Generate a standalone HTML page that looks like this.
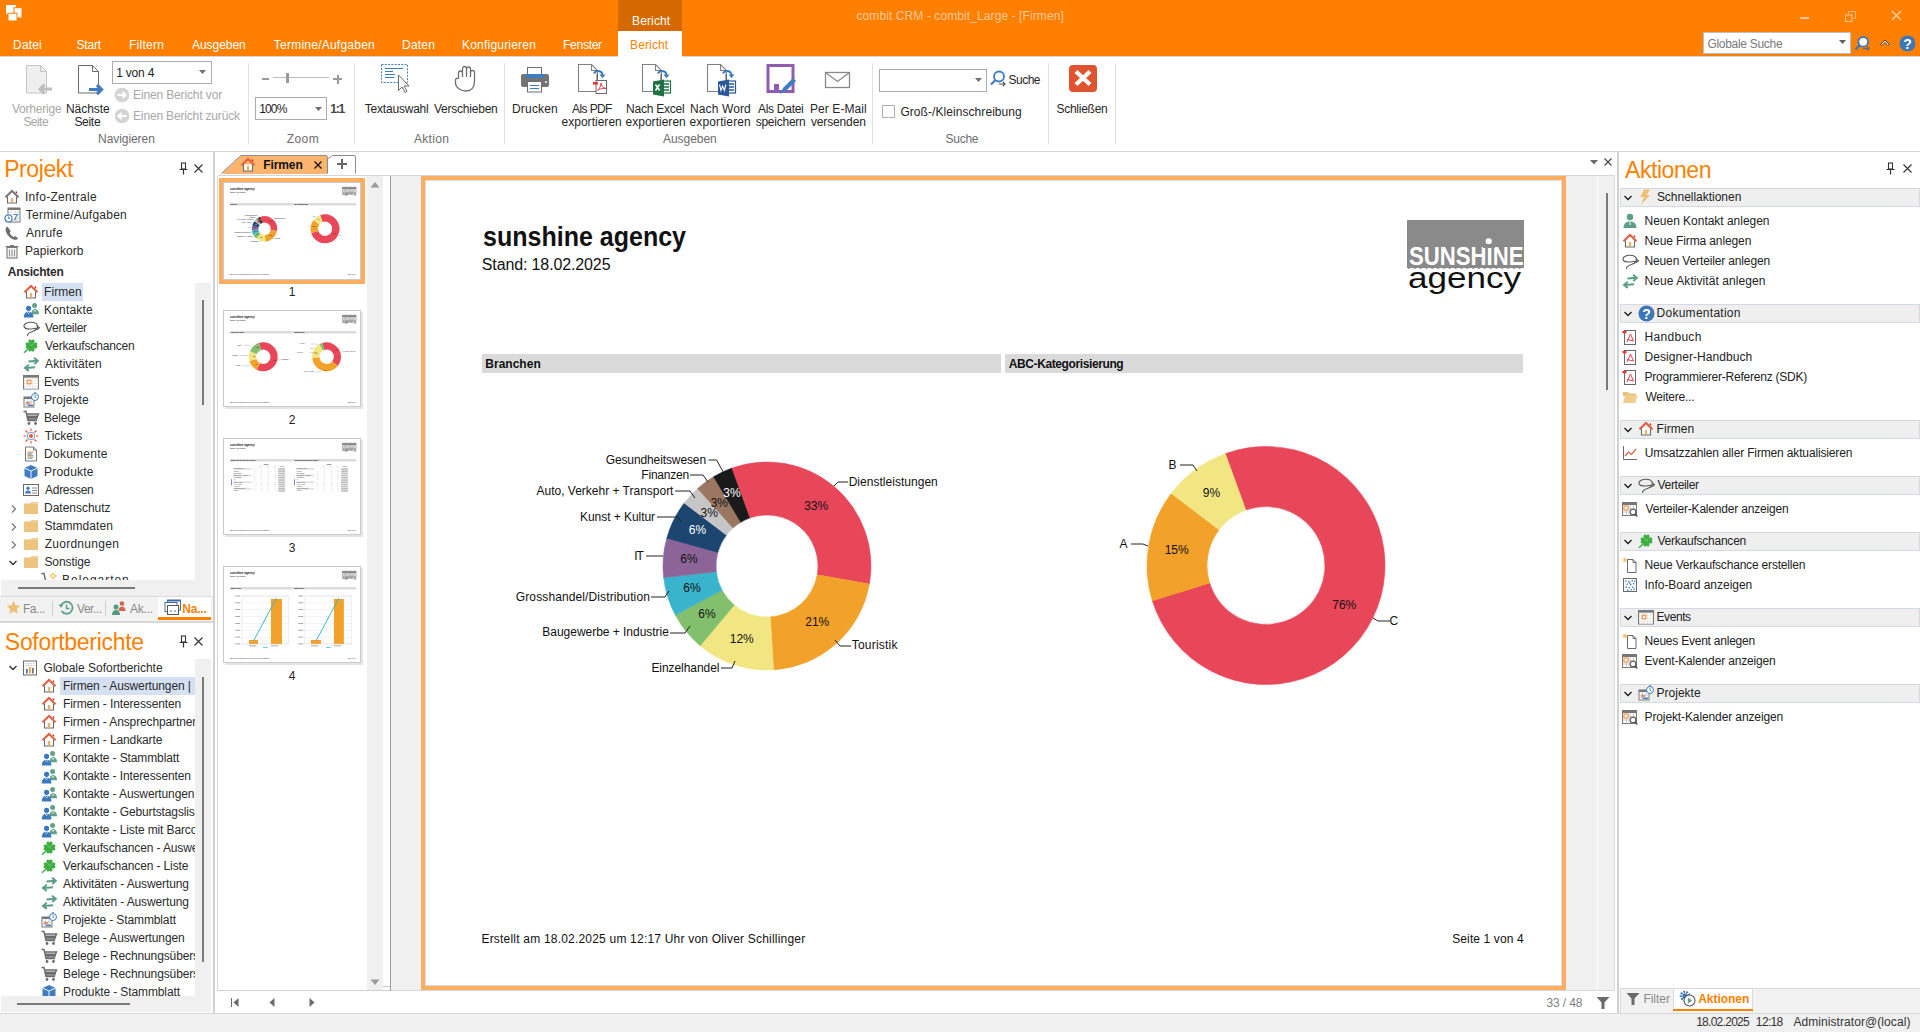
<!DOCTYPE html>
<html><head><meta charset="utf-8">
<style>
*{margin:0;padding:0;box-sizing:border-box}
html,body{width:1920px;height:1032px;overflow:hidden;background:#fff;font-family:"Liberation Sans",sans-serif;font-size:12px;color:#262626}
.t{position:absolute;white-space:nowrap}
.box{position:absolute}
svg{position:absolute;overflow:visible}
</style></head><body>
<div class="box" style="left:0px;top:0px;width:1920px;height:56px;background:#FF7F00;"></div>
<div class="box" style="left:618px;top:0px;width:64px;height:31px;background:#D56900;"></div>
<div class="box" style="left:618px;top:31px;width:64px;height:26px;background:#fff;"></div>
<div class="box" style="left:0px;top:56px;width:618px;height:1px;background:#D6D6D6;"></div>
<div class="box" style="left:682px;top:56px;width:1238px;height:1px;background:#D6D6D6;"></div>
<svg style="left:5px;top:4px;" width="20" height="20" viewBox="0 0 20 20"><rect x="1" y="1" width="10" height="9" fill="#fff"/>
<rect x="9" y="3.75" width="8" height="10.25" fill="#fff" stroke="#FF7F00" stroke-width="1"/>
<rect x="3" y="9.2" width="9" height="7.8" fill="#fff" stroke="#FF7F00" stroke-width="1"/></svg>
<div class="t" style="left:856.52px;top:9.84px;font-size:12px;line-height:12px;color:#FFC898;letter-spacing:0.091px;">combit CRM - combit_Large - [Firmen]</div>
<div class="t" style="left:632.04px;top:14.84px;font-size:12px;line-height:12px;color:#FFFFFF;letter-spacing:0.127px;">Bericht</div>
<div class="t" style="left:13.04px;top:38.84px;font-size:12px;line-height:12px;color:#FFFFFF;letter-spacing:0.180px;">Datei</div>
<div class="t" style="left:76.40px;top:38.84px;font-size:12px;line-height:12px;color:#FFFFFF;letter-spacing:-0.150px;">Start</div>
<div class="t" style="left:129.04px;top:38.84px;font-size:12px;line-height:12px;color:#FFFFFF;letter-spacing:0.240px;">Filtern</div>
<div class="t" style="left:192.00px;top:38.84px;font-size:12px;line-height:12px;color:#FFFFFF;letter-spacing:-0.040px;">Ausgeben</div>
<div class="t" style="left:273.76px;top:38.84px;font-size:12px;line-height:12px;color:#FFFFFF;letter-spacing:0.243px;">Termine/Aufgaben</div>
<div class="t" style="left:402.04px;top:38.84px;font-size:12px;line-height:12px;color:#FFFFFF;letter-spacing:0.190px;">Daten</div>
<div class="t" style="left:462.04px;top:38.84px;font-size:12px;line-height:12px;color:#FFFFFF;letter-spacing:0.200px;">Konfigurieren</div>
<div class="t" style="left:563.04px;top:38.84px;font-size:12px;line-height:12px;color:#FFFFFF;letter-spacing:-0.267px;">Fenster</div>
<div class="t" style="left:630.04px;top:38.84px;font-size:12px;line-height:12px;color:#FF7F00;letter-spacing:0.127px;">Bericht</div>
<div class="box" style="left:1800px;top:17px;width:9px;height:2px;background:#FFC898;"></div>
<svg style="left:1844px;top:10px;" width="14" height="14" viewBox="0 0 14 14"><path d="M4.5 4.5V1.5h7v7h-2.5" fill="none" stroke="#FFB880" stroke-width="1"/><rect x="1.5" y="5" width="6.5" height="6.5" fill="none" stroke="#FFC898" stroke-width="1"/></svg>
<svg style="left:1890px;top:9px;" width="14" height="14" viewBox="0 0 14 14"><path d="M2 2L11 11M11 2L2 11" stroke="#FFC898" stroke-width="1.5"/></svg>
<div class="box" style="left:1703px;top:32px;width:148px;height:22px;background:#fff;border:1px solid #B8C0C8"></div>
<div class="t" style="left:1707.40px;top:37.84px;font-size:12px;line-height:12px;color:#7A7A7A;letter-spacing:-0.293px;">Globale Suche</div>
<svg style="left:1839px;top:40px;" width="8" height="5" viewBox="0 0 8 5"><path d="M0 0h7L3.5 4z" fill="#606060"/></svg>
<svg style="left:1853px;top:35px;" width="20" height="18" viewBox="0 0 20 18"><circle cx="10.2" cy="6.8" r="4.8" fill="#fff" stroke="#3D78C0" stroke-width="1.8"/><path d="M6.8 10.2L2.5 14.5" stroke="#3D78C0" stroke-width="2.4"/><path d="M10 13.5h6M14 11.5l2 2-2 2" stroke="#707070" stroke-width="1.4" fill="none"/></svg>
<svg style="left:1879px;top:37px;" width="12" height="10" viewBox="0 0 12 10"><path d="M1.5 7.5L6 3l4.5 4.5L9 8.5 6 5.5 3 8.5z" fill="#FFE0C0" stroke="#3A3A3A" stroke-width="0.9" stroke-linejoin="round"/></svg>
<svg style="left:1899px;top:35px;" width="17" height="17" viewBox="0 0 17 17"><circle cx="8.5" cy="8.5" r="8" fill="#3D78B8"/><text x="8.5" y="13.5" text-anchor="middle" font-family="Liberation Sans" font-weight="bold" font-size="14" fill="#fff">?</text></svg>
<div class="box" style="left:0px;top:151px;width:1920px;height:1px;background:#D6D6D6;"></div>
<div class="box" style="left:248px;top:63px;width:1px;height:81px;background:#E1E1E1;"></div>
<div class="box" style="left:354px;top:63px;width:1px;height:81px;background:#E1E1E1;"></div>
<div class="box" style="left:504px;top:63px;width:1px;height:81px;background:#E1E1E1;"></div>
<div class="box" style="left:872px;top:63px;width:1px;height:81px;background:#E1E1E1;"></div>
<div class="box" style="left:1048px;top:63px;width:1px;height:81px;background:#E1E1E1;"></div>
<div class="box" style="left:1115px;top:63px;width:1px;height:81px;background:#E1E1E1;"></div>
<div class="t" style="left:98.04px;top:132.84px;font-size:12px;line-height:12px;color:#6D6D6D;letter-spacing:-0.062px;">Navigieren</div>
<div class="t" style="left:286.64px;top:132.84px;font-size:12px;line-height:12px;color:#6D6D6D;letter-spacing:0.493px;">Zoom</div>
<div class="t" style="left:414.00px;top:132.84px;font-size:12px;line-height:12px;color:#6D6D6D;letter-spacing:0.296px;">Aktion</div>
<div class="t" style="left:663.00px;top:132.84px;font-size:12px;line-height:12px;color:#6D6D6D;letter-spacing:-0.040px;">Ausgeben</div>
<div class="t" style="left:945.40px;top:132.84px;font-size:12px;line-height:12px;color:#6D6D6D;letter-spacing:-0.220px;">Suche</div>
<svg style="left:26px;top:65px;" width="28" height="32" viewBox="0 0 28 32"><path d="M0.5 0.5h14l6 6v21.5h-20z" fill="#EFEFEF" stroke="#C4C4C4"/><path d="M14.5 0.5v6h6" fill="none" stroke="#C4C4C4"/><path d="M26 24h-12M18.5 19.5L14 24l4.5 4.5" stroke="#BDBDBD" stroke-width="3" fill="none"/></svg>
<svg style="left:78px;top:65px;" width="28" height="32" viewBox="0 0 28 32"><path d="M0.5 0.5h14l6 6v21.5h-20z" fill="#fff" stroke="#6A6A6A"/><path d="M14.5 0.5v6h6" fill="none" stroke="#6A6A6A"/><path d="M11 24.5h12M19 20l4.5 4.5L19 29" stroke="#3F7CC0" stroke-width="3.2" fill="none"/></svg>
<div class="t" style="left:12.00px;top:102.84px;font-size:12px;line-height:12px;color:#A8A8A8;letter-spacing:-0.220px;">Vorherige</div>
<div class="t" style="left:23.40px;top:115.84px;font-size:12px;line-height:12px;color:#A8A8A8;letter-spacing:-0.540px;">Seite</div>
<div class="t" style="left:66.04px;top:102.84px;font-size:12px;line-height:12px;color:#262626;letter-spacing:-0.080px;">N&auml;chste</div>
<div class="t" style="left:74.40px;top:115.84px;font-size:12px;line-height:12px;color:#262626;letter-spacing:-0.290px;">Seite</div>
<div class="box" style="left:112px;top:61px;width:100px;height:23px;background:#fff;border:1px solid #ABABAB"></div>
<div class="t" style="left:116.16px;top:66.84px;font-size:12px;line-height:12px;color:#1E1E1E;letter-spacing:-0.193px;">1 von 4</div>
<svg style="left:199px;top:70px;" width="8" height="5" viewBox="0 0 8 5"><path d="M0 0h7L3.5 4z" fill="#707070"/></svg>
<svg style="left:114px;top:87px;" width="16" height="16" viewBox="0 0 16 16"><circle cx="8" cy="8" r="7.3" fill="#D4D4D4"/><path d="M3.5 8h8M8.5 4.8L11.7 8l-3.2 3.2" stroke="#fff" stroke-width="1.8" fill="none"/></svg>
<svg style="left:114px;top:108px;" width="16" height="16" viewBox="0 0 16 16"><circle cx="8" cy="8" r="7.3" fill="#D4D4D4"/><path d="M12.5 8h-8M7.5 4.8L4.3 8l3.2 3.2" stroke="#fff" stroke-width="1.8" fill="none"/></svg>
<div class="t" style="left:133.04px;top:88.84px;font-size:12px;line-height:12px;color:#A8A8A8;letter-spacing:-0.140px;">Einen Bericht vor</div>
<div class="t" style="left:133.04px;top:109.84px;font-size:12px;line-height:12px;color:#A8A8A8;letter-spacing:-0.162px;">Einen Bericht zur&uuml;ck</div>
<div class="box" style="left:262px;top:78px;width:7px;height:2px;background:#9A9A9A;"></div>
<div class="box" style="left:273px;top:77px;width:56px;height:1px;background:#BDBDBD;"></div>
<div class="box" style="left:286px;top:73px;width:3px;height:10px;background:#9A9A9A;"></div>
<div class="box" style="left:333px;top:78px;width:9px;height:2px;background:#9A9A9A;"></div>
<div class="box" style="left:336.5px;top:74.5px;width:2px;height:9px;background:#9A9A9A;"></div>
<div class="box" style="left:255px;top:97px;width:72px;height:23px;background:#fff;border:1px solid #ABABAB"></div>
<div class="t" style="left:259.16px;top:102.84px;font-size:12px;line-height:12px;color:#1E1E1E;letter-spacing:-0.840px;">100%</div>
<svg style="left:315px;top:107px;" width="8" height="5" viewBox="0 0 8 5"><path d="M0 0h7L3.5 4z" fill="#707070"/></svg>
<div class="t" style="left:330.28px;top:102.84px;font-size:12px;line-height:12px;color:#444;letter-spacing:-1.160px;font-weight:bold;">1:1</div>
<svg style="left:380px;top:63px;" width="34" height="34" viewBox="0 0 34 34"><rect x="1.5" y="1.5" width="26" height="18" fill="none" stroke="#3F7CC0" stroke-dasharray="2,1.3"/><path d="M5 5.5h18M5 8.5h8M5 11.5h10M5 14.5h9" stroke="#3F7CC0" stroke-width="1"/><path d="M18.5 12v15.5l3.5-3.5 3 5.5 2-1-3-5.5h5z" fill="#fff" stroke="#6A6A6A" stroke-width="1"/></svg>
<svg style="left:452px;top:65px;" width="28" height="30" viewBox="0 0 28 30"><path d="M6.5 14V8a2 2 0 0 1 4 0v4M10.5 12V3.5a2 2 0 0 1 4 0V12M14.5 12V4a2 2 0 0 1 4 0v8M18.5 12V7.5a2 2 0 0 1 4 0v9c0 6-3.5 9.5-8.5 9.5S3.5 22.5 3.5 18v-3a1.8 1.8 0 0 1 3-1.2" fill="#fff" stroke="#6E6E6E" stroke-width="1.3"/></svg>
<div class="t" style="left:364.76px;top:102.84px;font-size:12px;line-height:12px;color:#262626;letter-spacing:-0.204px;">Textauswahl</div>
<div class="t" style="left:434.00px;top:102.84px;font-size:12px;line-height:12px;color:#262626;letter-spacing:-0.228px;">Verschieben</div>
<svg style="left:520px;top:66px;" width="30" height="28" viewBox="0 0 30 28"><rect x="7.5" y="1.5" width="14" height="9" fill="#fff" stroke="#6E6E6E"/><rect x="1" y="8" width="28" height="13" rx="2" fill="#747474"/><rect x="6" y="8" width="18" height="4" fill="#3F7CC0"/><rect x="7.5" y="15.5" width="14" height="10.5" fill="#fff" stroke="#6E6E6E"/><path d="M10 19.5h9M10 22.5h9" stroke="#3F7CC0"/><circle cx="26" cy="16" r="1" fill="#fff"/></svg>
<svg style="left:577px;top:63px;" width="34" height="34" viewBox="0 0 34 34"><path d="M1.5 1.5h13l6 6v21h-19z" fill="#fff" stroke="#808080" stroke-width="1.1"/><path d="M14.5 1.5v6h6" fill="none" stroke="#808080" stroke-width="1.1"/><path d="M17 10.5a4.5 4.5 0 0 1 8.5 1.5" stroke="#3F7CC0" stroke-width="2" fill="none"/><path d="M22.5 11.5l3 3.8 3-3.8z" fill="#3F7CC0"/><path d="M20 11v6" stroke="#555" stroke-width="1"/><g transform="translate(0,2)"><rect x="19" y="15.5" width="10.5" height="13" fill="#fff" stroke="#6A6A6A"/><rect x="16" y="17" width="5" height="2.6" fill="#F0303A"/><path d="M20.5 25.5c2-1.5 3.5-5 3.5-7.5 0 2.5 2 5 5 5.5-2.5-.5-6 0-8.5 2z" stroke="#E8303A" stroke-width="0.9" fill="none"/></g></svg>
<svg style="left:641px;top:63px;" width="34" height="34" viewBox="0 0 34 34"><path d="M1.5 1.5h13l6 6v21h-19z" fill="#fff" stroke="#808080" stroke-width="1.1"/><path d="M14.5 1.5v6h6" fill="none" stroke="#808080" stroke-width="1.1"/><path d="M17 10.5a4.5 4.5 0 0 1 8.5 1.5" stroke="#3F7CC0" stroke-width="2" fill="none"/><path d="M22.5 11.5l3 3.8 3-3.8z" fill="#3F7CC0"/><path d="M20 11v6" stroke="#555" stroke-width="1"/><g transform="translate(0,2)"><rect x="20.5" y="16" width="9" height="12" fill="#fff" stroke="#1E7145" stroke-width="1.2"/><path d="M23 19h5M23 22h5M23 25h5" stroke="#1E7145" stroke-width="1.3"/><path d="M12 16.5l11-2v17l-11-2z" fill="#1E7145"/><path d="M14.5 19.5l4 6M18.5 19.5l-4 6" stroke="#fff" stroke-width="1.5"/></g></svg>
<svg style="left:706px;top:63px;" width="34" height="34" viewBox="0 0 34 34"><path d="M1.5 1.5h13l6 6v21h-19z" fill="#fff" stroke="#808080" stroke-width="1.1"/><path d="M14.5 1.5v6h6" fill="none" stroke="#808080" stroke-width="1.1"/><path d="M17 10.5a4.5 4.5 0 0 1 8.5 1.5" stroke="#3F7CC0" stroke-width="2" fill="none"/><path d="M22.5 11.5l3 3.8 3-3.8z" fill="#3F7CC0"/><path d="M20 11v6" stroke="#555" stroke-width="1"/><g transform="translate(0,2)"><rect x="20.5" y="16" width="9" height="12" fill="#fff" stroke="#2B579A" stroke-width="1.2"/><path d="M23 19h5M23 22h5M23 25h5" stroke="#2B579A" stroke-width="1.3"/><path d="M12 16.5l11-2v17l-11-2z" fill="#2B579A"/><path d="M13.5 19.5l1.5 6 1.7-4.5 1.7 4.5 1.5-6" stroke="#fff" stroke-width="1.1" fill="none"/></g></svg>
<svg style="left:766px;top:64px;" width="32" height="34" viewBox="0 0 32 34"><rect x="2" y="1.5" width="25" height="26" fill="#fff" stroke="#8E5CB0" stroke-width="3"/><rect x="8" y="20" width="5" height="6" fill="#8E5CB0"/><path d="M15 29l2-5 10-10 3 3-10 10z" fill="#3F7CC0"/><path d="M14 30l2-4 2 2z" fill="#3F7CC0"/></svg>
<svg style="left:824px;top:71px;" width="28" height="18" viewBox="0 0 28 18"><rect x="1.5" y="1.5" width="24" height="15" fill="#fff" stroke="#8A8A8A" stroke-width="1.3"/><path d="M1.5 1.5l12 9 12-9" fill="none" stroke="#8A8A8A" stroke-width="1.3"/></svg>
<div class="t" style="left:512.04px;top:102.84px;font-size:12px;line-height:12px;color:#262626;letter-spacing:0.173px;">Drucken</div>
<div class="t" style="left:572.00px;top:102.84px;font-size:12px;line-height:12px;color:#262626;letter-spacing:-0.593px;">Als PDF</div>
<div class="t" style="left:626.04px;top:102.84px;font-size:12px;line-height:12px;color:#262626;letter-spacing:-0.227px;">Nach Excel</div>
<div class="t" style="left:690.04px;top:102.84px;font-size:12px;line-height:12px;color:#262626;letter-spacing:0.115px;">Nach Word</div>
<div class="t" style="left:758.00px;top:102.84px;font-size:12px;line-height:12px;color:#262626;letter-spacing:-0.285px;">Als Datei</div>
<div class="t" style="left:810.04px;top:102.84px;font-size:12px;line-height:12px;color:#262626;letter-spacing:0.071px;">Per E-Mail</div>
<div class="t" style="left:561.52px;top:115.84px;font-size:12px;line-height:12px;color:#262626;letter-spacing:0.020px;">exportieren</div>
<div class="t" style="left:625.52px;top:115.84px;font-size:12px;line-height:12px;color:#262626;letter-spacing:0.020px;">exportieren</div>
<div class="t" style="left:689.52px;top:115.84px;font-size:12px;line-height:12px;color:#262626;letter-spacing:0.120px;">exportieren</div>
<div class="t" style="left:755.64px;top:115.84px;font-size:12px;line-height:12px;color:#262626;letter-spacing:-0.235px;">speichern</div>
<div class="t" style="left:811.00px;top:115.84px;font-size:12px;line-height:12px;color:#262626;letter-spacing:-0.150px;">versenden</div>
<div class="box" style="left:879px;top:69px;width:108px;height:23px;background:#fff;border:1px solid #ABABAB"></div>
<svg style="left:975px;top:78px;" width="8" height="5" viewBox="0 0 8 5"><path d="M0 0h7L3.5 4z" fill="#707070"/></svg>
<svg style="left:989px;top:70px;" width="20" height="18" viewBox="0 0 20 18"><circle cx="10" cy="6.5" r="5" fill="#fff" stroke="#3F7CC0" stroke-width="1.8"/><path d="M6.3 10.2L2 14.5" stroke="#3F7CC0" stroke-width="2.2"/><path d="M10 14h6M14 12l2 2-2 2" stroke="#555" stroke-width="1.2" fill="none"/></svg>
<div class="t" style="left:1008.40px;top:73.84px;font-size:12px;line-height:12px;color:#262626;letter-spacing:-0.470px;">Suche</div>
<div class="box" style="left:882px;top:105px;width:13px;height:13px;background:#fff;border:1px solid #B0B0B0"></div>
<div class="t" style="left:900.40px;top:105.84px;font-size:12px;line-height:12px;color:#262626;letter-spacing:0.066px;">Gro&szlig;-/Kleinschreibung</div>
<svg style="left:1068px;top:64px;" width="30" height="30" viewBox="0 0 30 30"><rect x="1" y="1" width="28" height="27" rx="4" fill="#E0532F"/><path d="M8 7.5l14 13M22 7.5l-14 13" stroke="#fff" stroke-width="4.2"/></svg>
<div class="t" style="left:1056.40px;top:102.84px;font-size:12px;line-height:12px;color:#262626;letter-spacing:-0.245px;">Schlie&szlig;en</div>
<div class="box" style="left:213px;top:152px;width:2px;height:861px;background:#D0D0D0;"></div>
<div class="t" style="left:4.16px;top:158.33px;font-size:23px;line-height:23px;color:#FF7F00;letter-spacing:-0.410px;">Projekt</div>
<svg style="left:179px;top:162px;" width="10" height="14" viewBox="0 0 10 14"><rect x="2.5" y="1" width="4" height="6" fill="none" stroke="#333" stroke-width="1.1"/><path d="M0.5 7.5h8M4.5 7.5v5" stroke="#333" stroke-width="1.2"/></svg>
<svg style="left:194px;top:164px;" width="9" height="9" viewBox="0 0 9 9"><path d="M0.5 0.5L8.5 8.5M8.5 0.5L0.5 8.5" stroke="#333" stroke-width="1.1"/></svg>
<svg style="left:4px;top:189px;" width="16" height="16" viewBox="0 0 16 16"><path d="M1.5 8.2L8 2l6.5 6.2" fill="none" stroke="#777" stroke-width="2"/><path d="M3.5 7.5v6.5h9V7.5" fill="#fff" stroke="#6A6A6A" stroke-width="1.1"/><rect x="6.8" y="9" width="2.4" height="4.5" fill="#E6B36A"/><path d="M12 2.5l0.8 1.8" stroke="#E02020" stroke-width="1.4"/></svg>
<div class="t" style="left:24.92px;top:190.84px;font-size:12px;line-height:12px;color:#2B2B2B;letter-spacing:0.303px;">Info-Zentrale</div>
<svg style="left:4px;top:207px;" width="17" height="16" viewBox="0 0 17 16"><rect x="4" y="1" width="12" height="14" fill="#fff" stroke="#777"/><rect x="4" y="1" width="12" height="2" fill="#777"/><path d="M6 5h2M10 5h2M13 5h2M6 8h2M13 8h2M13 11h2M8 13h6" stroke="#C8C8C8"/><text x="11.5" y="12.5" font-family="Liberation Sans" font-weight="bold" font-size="9" fill="#3F7CC0" text-anchor="middle">7</text><circle cx="4.5" cy="11.5" r="3.5" fill="#fff" stroke="#3F7CC0" stroke-width="1.2"/><path d="M4.5 9.5v2h1.5" stroke="#3F7CC0" fill="none" stroke-width="0.9"/></svg>
<div class="t" style="left:25.76px;top:208.84px;font-size:12px;line-height:12px;color:#2B2B2B;letter-spacing:0.243px;">Termine/Aufgaben</div>
<svg style="left:4px;top:225px;" width="16" height="16" viewBox="0 0 16 16"><path d="M3.5 1.5c-2 1-2.5 3-1.5 5.5 1.5 3.5 4 6 7.5 7.5 2 .8 3.5.2 4.5-1l-2.5-2.5-2 1c-1.5-.8-3-2.5-3.8-4l1-2z" fill="#6E6E6E"/></svg>
<div class="t" style="left:26.00px;top:226.84px;font-size:12px;line-height:12px;color:#2B2B2B;letter-spacing:0.240px;">Anrufe</div>
<svg style="left:4px;top:243px;" width="16" height="16" viewBox="0 0 16 16"><path d="M1.5 3.5h13M6 2.5h4" stroke="#777" stroke-width="1.2"/><rect x="3" y="4.5" width="10" height="10.5" fill="#fff" stroke="#777" stroke-width="1.1"/><path d="M5.5 6.5v7M8 6.5v7M10.5 6.5v7" stroke="#9A9A9A" stroke-width="1.3"/></svg>
<div class="t" style="left:25.04px;top:244.84px;font-size:12px;line-height:12px;color:#2B2B2B;letter-spacing:0.040px;">Papierkorb</div>
<div class="t" style="left:7.76px;top:265.84px;font-size:12px;line-height:12px;color:#2B2B2B;letter-spacing:-0.250px;font-weight:bold;">Ansichten</div>
<div class="box" style="left:0;top:283px;width:195px;height:297px;overflow:hidden">
<div class="box" style="left:42px;top:0px;width:41px;height:18px;background:#D5E1F2;"></div><svg style="left:23px;top:1px;" width="16" height="16" viewBox="0 0 16 16"><path d="M1.5 8.2L8 2l6.5 6.2" fill="none" stroke="#E0603F" stroke-width="2"/><path d="M3.5 7.5v6.5h9V7.5" fill="#fff" stroke="#6A6A6A" stroke-width="1.1"/><rect x="6.8" y="9" width="2.4" height="4.5" fill="#E6B36A"/><path d="M12 2.5l0.8 1.8" stroke="#E02020" stroke-width="1.4"/></svg><div class="t" style="left:44.04px;top:2.84px;font-size:12px;line-height:12px;color:#2B2B2B;letter-spacing:0.072px;">Firmen</div><svg style="left:23px;top:19px;" width="17" height="16" viewBox="0 0 17 16"><circle cx="11.6" cy="3.6" r="2.5" fill="#62A089"/><path d="M8.6 12.2C8.6 8.6 10 7 12 7s4 1.6 4 5.2z" fill="#62A089"/><path d="M10.6 7.4l1.4 2.2 1.4-2.2" stroke="#fff" stroke-width="0.7" fill="none"/><circle cx="5.6" cy="6.3" r="2.6" fill="#3C78BE"/><path d="M0.8 15.5C0.8 11.5 2.8 9.8 5.6 9.8s4.8 1.7 4.8 5.7z" fill="#3C78BE"/><path d="M4.3 10.2l1.3 1.6 1.3-1.6" stroke="#fff" stroke-width="0.7" fill="none"/></svg><div class="t" style="left:44.04px;top:20.84px;font-size:12px;line-height:12px;color:#2B2B2B;letter-spacing:0.166px;">Kontakte</div><svg style="left:23px;top:37px;" width="17" height="17" viewBox="0 0 17 17"><path d="M4.5 16C4 14 6.5 12.5 10 11.3 13.5 10 15 8.5 14.5 6 13.8 3 10 2.2 7 2.3 3 2.5 0.5 4.5 1 6.5 1.5 8.5 6 9.2 10 8.8 12.5 8.5 14 8 16.2 7.8" fill="none" stroke="#5A5A5A" stroke-width="1.15"/><path d="M13.8 5.8l2.6 2-2.4 2" fill="none" stroke="#5A5A5A" stroke-width="1.1"/></svg><div class="t" style="left:45.00px;top:38.84px;font-size:12px;line-height:12px;color:#2B2B2B;letter-spacing:-0.240px;">Verteiler</div><svg style="left:23px;top:55px;" width="17" height="16" viewBox="0 0 17 16"><path transform="rotate(0 8.5 7.5)" d="M8.5 7.5C6.5 6 5 4.5 5.5 2.8 6 1.3 7.8 1.2 8.5 2.5 9.2 1.2 11 1.3 11.5 2.8 12 4.5 10.5 6 8.5 7.5z" fill="#3DAE3F"/><path transform="rotate(90 8.5 7.5)" d="M8.5 7.5C6.5 6 5 4.5 5.5 2.8 6 1.3 7.8 1.2 8.5 2.5 9.2 1.2 11 1.3 11.5 2.8 12 4.5 10.5 6 8.5 7.5z" fill="#3DAE3F"/><path transform="rotate(180 8.5 7.5)" d="M8.5 7.5C6.5 6 5 4.5 5.5 2.8 6 1.3 7.8 1.2 8.5 2.5 9.2 1.2 11 1.3 11.5 2.8 12 4.5 10.5 6 8.5 7.5z" fill="#3DAE3F"/><path transform="rotate(270 8.5 7.5)" d="M8.5 7.5C6.5 6 5 4.5 5.5 2.8 6 1.3 7.8 1.2 8.5 2.5 9.2 1.2 11 1.3 11.5 2.8 12 4.5 10.5 6 8.5 7.5z" fill="#3DAE3F"/><path d="M8.3 8L1 14.8" stroke="#3DAE3F" stroke-width="1.4"/><path d="M6.8 5.8L8.5 7.5M10.2 5.8L8.5 7.5" stroke="#7ED67A" stroke-width="0.6"/></svg><div class="t" style="left:45.00px;top:56.84px;font-size:12px;line-height:12px;color:#2B2B2B;letter-spacing:-0.166px;">Verkaufschancen</div><svg style="left:23px;top:73px;" width="17" height="16" viewBox="0 0 17 16"><path d="M5.5 5.6L14.2 4.8" stroke="#5A9E85" stroke-width="2" fill="none"/><path d="M11.6 2.2L14.8 4.8 11.9 7.4" stroke="#5A9E85" stroke-width="2" fill="none" stroke-linecap="round"/><path d="M12 11.2L2.6 12" stroke="#5A9E85" stroke-width="2" fill="none"/><path d="M5.2 9.2L2 11.9 5.2 14.4" stroke="#5A9E85" stroke-width="2" fill="none" stroke-linecap="round"/></svg><div class="t" style="left:45.00px;top:74.84px;font-size:12px;line-height:12px;color:#2B2B2B;letter-spacing:0.140px;">Aktivit&auml;ten</div><svg style="left:23px;top:91px;" width="16" height="16" viewBox="0 0 16 16"><rect x="0" y="1" width="16" height="14.5" fill="#7A7A7A"/><rect x="1" y="3.6" width="14" height="11" fill="#E0E0E0"/><rect x="1.60" y="4.40" width="2.1" height="2.1" fill="#fff"/><rect x="1.60" y="7.10" width="2.1" height="2.1" fill="#fff"/><rect x="1.60" y="9.80" width="2.1" height="2.1" fill="#fff"/><rect x="1.60" y="12.50" width="2.1" height="2.1" fill="#fff"/><rect x="4.30" y="4.40" width="2.1" height="2.1" fill="#fff"/><rect x="4.30" y="7.10" width="2.1" height="2.1" fill="#fff"/><rect x="4.30" y="9.80" width="2.1" height="2.1" fill="#fff"/><rect x="4.30" y="12.50" width="2.1" height="2.1" fill="#fff"/><rect x="7.00" y="4.40" width="2.1" height="2.1" fill="#fff"/><rect x="7.00" y="7.10" width="2.1" height="2.1" fill="#fff"/><rect x="7.00" y="9.80" width="2.1" height="2.1" fill="#fff"/><rect x="7.00" y="12.50" width="2.1" height="2.1" fill="#fff"/><rect x="9.70" y="4.40" width="2.1" height="2.1" fill="#fff"/><rect x="9.70" y="7.10" width="2.1" height="2.1" fill="#fff"/><rect x="9.70" y="9.80" width="2.1" height="2.1" fill="#fff"/><rect x="9.70" y="12.50" width="2.1" height="2.1" fill="#fff"/><rect x="12.40" y="4.40" width="2.1" height="2.1" fill="#fff"/><rect x="12.40" y="7.10" width="2.1" height="2.1" fill="#fff"/><rect x="12.40" y="9.80" width="2.1" height="2.1" fill="#fff"/><rect x="12.40" y="12.50" width="2.1" height="2.1" fill="#fff"/><rect x="4.3" y="6.2" width="3.6" height="3.6" fill="#fff" stroke="#F08A3A" stroke-width="1.1"/></svg><div class="t" style="left:44.04px;top:92.84px;font-size:12px;line-height:12px;color:#2B2B2B;letter-spacing:-0.280px;">Events</div><svg style="left:23px;top:109px;" width="16" height="16" viewBox="0 0 16 16"><rect x="1" y="5" width="10" height="10" fill="#fff" stroke="#777"/><rect x="1" y="5" width="10" height="2" fill="#777"/><path d="M1 10h10M1 12.5h10M4.5 7v8M8 7v8" stroke="#BDBDBD" stroke-width="0.8"/><path d="M3 11h4" stroke="#E06040" stroke-width="1.3"/><path d="M5 13.5h5" stroke="#3F7CC0" stroke-width="1.3"/><circle cx="12" cy="5" r="3.5" fill="#fff" stroke="#3F7CC0"/><path d="M12 3v2.2l1.3 1" stroke="#3F7CC0" fill="none" stroke-width="0.9"/><path d="M11 0.8h2" stroke="#3F7CC0"/></svg><div class="t" style="left:44.04px;top:110.84px;font-size:12px;line-height:12px;color:#2B2B2B;letter-spacing:0.074px;">Projekte</div><svg style="left:23px;top:127px;" width="16" height="16" viewBox="0 0 16 16"><path d="M0.5 1.5h2.5l2 9h9" fill="none" stroke="#6A6A6A" stroke-width="1.4"/><path d="M3.5 4h12l-1 2.2H4M4.3 7.3h10L13.7 9H4.7" fill="none" stroke="#6A6A6A" stroke-width="1.4"/><circle cx="6" cy="13.5" r="1.4" fill="#6A6A6A"/><circle cx="12.5" cy="13.5" r="1.4" fill="#6A6A6A"/></svg><div class="t" style="left:44.04px;top:128.84px;font-size:12px;line-height:12px;color:#2B2B2B;letter-spacing:-0.176px;">Belege</div><svg style="left:23px;top:145px;" width="16" height="16" viewBox="0 0 16 16"><circle cx="8" cy="8" r="3.8" fill="#fff" stroke="#6A9AD0" stroke-width="1"/><circle cx="8" cy="8" r="2" fill="#E8553A"/><path d="M8 0.5v2.5M8 13v2.5M0.5 8h2.5M13 8h2.5M2.5 2.5l2 2M11.5 11.5l2 2M13.5 2.5l-2 2M4.5 11.5l-2 2" stroke="#E8553A" stroke-width="1.1"/></svg><div class="t" style="left:44.76px;top:146.84px;font-size:12px;line-height:12px;color:#2B2B2B;letter-spacing:0.007px;">Tickets</div><svg style="left:23px;top:163px;" width="16" height="16" viewBox="0 0 16 16"><path d="M2.5 1h8l3 3v11h-11z" fill="#fff" stroke="#777"/><path d="M10.5 1v3h3" fill="none" stroke="#777"/><path d="M4.5 6h6M4.5 8.5h4M4.5 11h6" stroke="#F0A030" stroke-width="1"/><path d="M4.5 7.2h5M4.5 9.7h6M4.5 12.3h5" stroke="#3F7CC0" stroke-width="0.8"/></svg><div class="t" style="left:44.04px;top:164.84px;font-size:12px;line-height:12px;color:#2B2B2B;letter-spacing:0.265px;">Dokumente</div><svg style="left:23px;top:181px;" width="16" height="16" viewBox="0 0 16 16"><path d="M8 1L14.5 4v8L8 15 1.5 12V4z" fill="#3F7CC0"/><path d="M1.5 4L8 7l6.5-3M8 7v8" stroke="#fff" stroke-width="0.9" fill="none"/></svg><div class="t" style="left:44.04px;top:182.84px;font-size:12px;line-height:12px;color:#2B2B2B;letter-spacing:0.206px;">Produkte</div><svg style="left:23px;top:199px;" width="16" height="16" viewBox="0 0 16 16"><rect x="0.5" y="2.5" width="15" height="11" fill="#fff" stroke="#6A6A6A"/><circle cx="5" cy="6.3" r="1.7" fill="#3F7CC0"/><path d="M2 11.5c0-2 1.3-3 3-3s3 1 3 3z" fill="#3F7CC0"/><path d="M9 6h5M9 8.5h5M9 11h5" stroke="#6A6A6A" stroke-width="0.8"/></svg><div class="t" style="left:45.00px;top:200.84px;font-size:12px;line-height:12px;color:#2B2B2B;letter-spacing:-0.274px;">Adressen</div><svg style="left:23px;top:217px;" width="16" height="16" viewBox="0 0 16 16"><path d="M1 3.5h6.5l1-1.5h6.5V14H1z" fill="#ECC47F"/><path d="M8.5 3.2h6.3" stroke="#F8E8C8" stroke-width="0.8"/></svg><div class="t" style="left:44.04px;top:218.84px;font-size:12px;line-height:12px;color:#2B2B2B;letter-spacing:-0.016px;">Datenschutz</div><svg style="left:9px;top:221px;" width="10" height="10" viewBox="0 0 10 10"><path d="M3 1.5l3.5 3.5L3 8.5" fill="none" stroke="#777" stroke-width="1.2"/></svg><svg style="left:23px;top:235px;" width="16" height="16" viewBox="0 0 16 16"><path d="M1 3.5h6.5l1-1.5h6.5V14H1z" fill="#ECC47F"/><path d="M8.5 3.2h6.3" stroke="#F8E8C8" stroke-width="0.8"/></svg><div class="t" style="left:44.40px;top:236.84px;font-size:12px;line-height:12px;color:#2B2B2B;letter-spacing:0.044px;">Stammdaten</div><svg style="left:9px;top:239px;" width="10" height="10" viewBox="0 0 10 10"><path d="M3 1.5l3.5 3.5L3 8.5" fill="none" stroke="#777" stroke-width="1.2"/></svg><svg style="left:23px;top:253px;" width="16" height="16" viewBox="0 0 16 16"><path d="M1 3.5h6.5l1-1.5h6.5V14H1z" fill="#ECC47F"/><path d="M8.5 3.2h6.3" stroke="#F8E8C8" stroke-width="0.8"/></svg><div class="t" style="left:44.64px;top:254.84px;font-size:12px;line-height:12px;color:#2B2B2B;letter-spacing:0.280px;">Zuordnungen</div><svg style="left:9px;top:257px;" width="10" height="10" viewBox="0 0 10 10"><path d="M3 1.5l3.5 3.5L3 8.5" fill="none" stroke="#777" stroke-width="1.2"/></svg><svg style="left:23px;top:271px;" width="16" height="16" viewBox="0 0 16 16"><path d="M1 3.5h6.5l1-1.5h6.5V14H1z" fill="#ECC47F"/><path d="M8.5 3.2h6.3" stroke="#F8E8C8" stroke-width="0.8"/></svg><div class="t" style="left:44.40px;top:272.84px;font-size:12px;line-height:12px;color:#2B2B2B;letter-spacing:-0.086px;">Sonstige</div><svg style="left:8px;top:275px;" width="10" height="10" viewBox="0 0 10 10"><path d="M1.5 3l3.5 3.5L8.5 3" fill="none" stroke="#333" stroke-width="1.4"/></svg><svg style="left:41px;top:289px;" width="16" height="16" viewBox="0 0 16 16"><path d="M0.5 1.5h2.5l2 9h9" fill="none" stroke="#6A6A6A" stroke-width="1.4"/><circle cx="12" cy="4" r="2" fill="none" stroke="#F0B040"/><path d="M12 0.5v1.2M12 6.3v1.2M8.5 4h1.2M14.3 4h1.2" stroke="#F0B040"/></svg><div class="t" style="left:62.04px;top:290.84px;font-size:12px;line-height:12px;color:#2B2B2B;letter-spacing:0.969px;">Belegarten</div></div>
<div class="box" style="left:195px;top:283px;width:16px;height:297px;background:#F0F0F0;"></div>
<div class="box" style="left:202px;top:300px;width:2px;height:105px;background:#7A7A7A;"></div>
<div class="box" style="left:1px;top:580px;width:210px;height:16px;background:#F0F0F0;"></div>
<div class="box" style="left:18px;top:587px;width:117px;height:2px;background:#7A7A7A;"></div>
<div class="box" style="left:0px;top:596px;width:213px;height:25px;background:#F2F2F2;border-top:1px solid #DCDCDC"></div>
<div class="box" style="left:158px;top:597px;width:53px;height:23px;background:#FFFFFF;"></div>
<div class="box" style="left:158px;top:617px;width:53px;height:3px;background:#FF7F00;"></div>
<div class="box" style="left:52px;top:601px;width:1px;height:15px;background:#CFCFCF;"></div>
<div class="box" style="left:105px;top:601px;width:1px;height:15px;background:#CFCFCF;"></div>
<svg style="left:6px;top:600px;" width="15" height="15" viewBox="0 0 15 15"><path d="M7.5 0.8l2 4.5 4.8.5-3.6 3.2 1 4.8-4.2-2.5-4.2 2.5 1-4.8L0.7 5.8l4.8-.5z" fill="#ECC070"/></svg>
<div class="t" style="left:23.04px;top:602.84px;font-size:12px;line-height:12px;color:#8A8A8A;letter-spacing:-0.490px;">Fa...</div>
<svg style="left:58px;top:600px;" width="16" height="16" viewBox="0 0 16 16"><path d="M3 5.5A6 6 0 1 1 3.5 11" fill="none" stroke="#5FA38A" stroke-width="1.8"/><path d="M0.5 4.5h5l-2.5 3.5z" fill="#5FA38A"/><path d="M8.5 4.5v4h3" stroke="#5FA38A" stroke-width="1.4" fill="none"/></svg>
<div class="t" style="left:77.00px;top:602.84px;font-size:12px;line-height:12px;color:#8A8A8A;letter-spacing:-0.456px;">Ver...</div>
<svg style="left:111px;top:600px;" width="16" height="16" viewBox="0 0 16 16"><circle cx="11" cy="3.5" r="2.3" fill="#D0684D"/><path d="M7.5 11c0-3 1.5-4.5 3.5-4.5s3.5 1.5 3.5 4.5z" fill="#D0684D"/><circle cx="5" cy="7" r="2.5" fill="#4E9C7C"/><path d="M1 15c0-3.5 1.8-5 4-5s4 1.5 4 5z" fill="#4E9C7C"/></svg>
<div class="t" style="left:130.00px;top:602.84px;font-size:12px;line-height:12px;color:#8A8A8A;letter-spacing:-0.230px;">Ak...</div>
<svg style="left:164px;top:599px;" width="17" height="17" viewBox="0 0 17 17"><rect x="3.5" y="1" width="13" height="10" fill="#fff" stroke="#3F6DA8"/><rect x="3.5" y="1" width="13" height="1.5" fill="#3F6DA8"/><rect x="1" y="3.5" width="12" height="9" fill="#fff" stroke="#3F6DA8"/><rect x="3.5" y="6.5" width="11" height="9" fill="#fff" stroke="#555"/><path d="M6 12h2M10 12h2" stroke="#3F7CC0"/></svg>
<div class="t" style="left:182.28px;top:602.84px;font-size:12px;line-height:12px;color:#FF7F00;letter-spacing:-0.190px;font-weight:bold;">Na...</div>
<div class="box" style="left:0px;top:621px;width:213px;height:2px;background:#D8D8D8;"></div>
<div class="t" style="left:4.85px;top:630.83px;font-size:23px;line-height:23px;color:#FF7F00;letter-spacing:-0.307px;">Sofortberichte</div>
<svg style="left:179px;top:635px;" width="10" height="14" viewBox="0 0 10 14"><rect x="2.5" y="1" width="4" height="6" fill="none" stroke="#333" stroke-width="1.1"/><path d="M0.5 7.5h8M4.5 7.5v5" stroke="#333" stroke-width="1.2"/></svg>
<svg style="left:194px;top:637px;" width="9" height="9" viewBox="0 0 9 9"><path d="M0.5 0.5L8.5 8.5M8.5 0.5L0.5 8.5" stroke="#333" stroke-width="1.1"/></svg>
<svg style="left:8px;top:663px;" width="10" height="10" viewBox="0 0 10 10"><path d="M1.5 3l3.5 3.5L8.5 3" fill="none" stroke="#333" stroke-width="1.4"/></svg>
<svg style="left:22px;top:660px;" width="16" height="16" viewBox="0 0 16 16"><rect x="1.5" y="1" width="13" height="14" fill="#fff" stroke="#6A6A6A"/><path d="M3.5 3.5h9M3.5 5.5h9" stroke="#BDBDBD" stroke-width="0.8" stroke-dasharray="1.5,1"/><rect x="4" y="9" width="1.8" height="4.5" fill="#3F7CC0"/><rect x="7" y="7" width="1.8" height="6.5" fill="#F0A030"/><rect x="10" y="8" width="1.8" height="5.5" fill="#777"/></svg>
<div class="t" style="left:43.40px;top:661.84px;font-size:12px;line-height:12px;color:#2B2B2B;letter-spacing:-0.010px;">Globale Sofortberichte</div>
<div class="box" style="left:0;top:677px;width:195px;height:319px;overflow:hidden">
<div class="box" style="left:60px;top:0px;width:135px;height:18px;background:#D5E1F2;"></div><svg style="left:41px;top:1px;" width="16" height="16" viewBox="0 0 16 16"><path d="M1.5 8.2L8 2l6.5 6.2" fill="none" stroke="#E0603F" stroke-width="2"/><path d="M3.5 7.5v6.5h9V7.5" fill="#fff" stroke="#6A6A6A" stroke-width="1.1"/><rect x="6.8" y="9" width="2.4" height="4.5" fill="#E6B36A"/><path d="M12 2.5l0.8 1.8" stroke="#E02020" stroke-width="1.4"/></svg><div class="t" style="left:63px;top:2.84px;font-size:12px;line-height:12px;color:#2B2B2B;letter-spacing:-0.12px">Firmen - Auswertungen |</div><svg style="left:41px;top:19px;" width="16" height="16" viewBox="0 0 16 16"><path d="M1.5 8.2L8 2l6.5 6.2" fill="none" stroke="#E0603F" stroke-width="2"/><path d="M3.5 7.5v6.5h9V7.5" fill="#fff" stroke="#6A6A6A" stroke-width="1.1"/><rect x="6.8" y="9" width="2.4" height="4.5" fill="#E6B36A"/><path d="M12 2.5l0.8 1.8" stroke="#E02020" stroke-width="1.4"/></svg><div class="t" style="left:63px;top:20.84px;font-size:12px;line-height:12px;color:#2B2B2B;letter-spacing:-0.12px">Firmen - Interessenten</div><svg style="left:41px;top:37px;" width="16" height="16" viewBox="0 0 16 16"><path d="M1.5 8.2L8 2l6.5 6.2" fill="none" stroke="#E0603F" stroke-width="2"/><path d="M3.5 7.5v6.5h9V7.5" fill="#fff" stroke="#6A6A6A" stroke-width="1.1"/><rect x="6.8" y="9" width="2.4" height="4.5" fill="#E6B36A"/><path d="M12 2.5l0.8 1.8" stroke="#E02020" stroke-width="1.4"/></svg><div class="t" style="left:63px;top:38.84px;font-size:12px;line-height:12px;color:#2B2B2B;letter-spacing:-0.12px">Firmen - Ansprechpartner</div><svg style="left:41px;top:55px;" width="16" height="16" viewBox="0 0 16 16"><path d="M1.5 8.2L8 2l6.5 6.2" fill="none" stroke="#E0603F" stroke-width="2"/><path d="M3.5 7.5v6.5h9V7.5" fill="#fff" stroke="#6A6A6A" stroke-width="1.1"/><rect x="6.8" y="9" width="2.4" height="4.5" fill="#E6B36A"/><path d="M12 2.5l0.8 1.8" stroke="#E02020" stroke-width="1.4"/></svg><div class="t" style="left:63px;top:56.84px;font-size:12px;line-height:12px;color:#2B2B2B;letter-spacing:-0.12px">Firmen - Landkarte</div><svg style="left:41px;top:73px;" width="17" height="16" viewBox="0 0 17 16"><circle cx="11.6" cy="3.6" r="2.5" fill="#62A089"/><path d="M8.6 12.2C8.6 8.6 10 7 12 7s4 1.6 4 5.2z" fill="#62A089"/><path d="M10.6 7.4l1.4 2.2 1.4-2.2" stroke="#fff" stroke-width="0.7" fill="none"/><circle cx="5.6" cy="6.3" r="2.6" fill="#3C78BE"/><path d="M0.8 15.5C0.8 11.5 2.8 9.8 5.6 9.8s4.8 1.7 4.8 5.7z" fill="#3C78BE"/><path d="M4.3 10.2l1.3 1.6 1.3-1.6" stroke="#fff" stroke-width="0.7" fill="none"/></svg><div class="t" style="left:63px;top:74.84px;font-size:12px;line-height:12px;color:#2B2B2B;letter-spacing:-0.12px">Kontakte - Stammblatt</div><svg style="left:41px;top:91px;" width="17" height="16" viewBox="0 0 17 16"><circle cx="11.6" cy="3.6" r="2.5" fill="#62A089"/><path d="M8.6 12.2C8.6 8.6 10 7 12 7s4 1.6 4 5.2z" fill="#62A089"/><path d="M10.6 7.4l1.4 2.2 1.4-2.2" stroke="#fff" stroke-width="0.7" fill="none"/><circle cx="5.6" cy="6.3" r="2.6" fill="#3C78BE"/><path d="M0.8 15.5C0.8 11.5 2.8 9.8 5.6 9.8s4.8 1.7 4.8 5.7z" fill="#3C78BE"/><path d="M4.3 10.2l1.3 1.6 1.3-1.6" stroke="#fff" stroke-width="0.7" fill="none"/></svg><div class="t" style="left:63px;top:92.84px;font-size:12px;line-height:12px;color:#2B2B2B;letter-spacing:-0.12px">Kontakte - Interessenten</div><svg style="left:41px;top:109px;" width="17" height="16" viewBox="0 0 17 16"><circle cx="11.6" cy="3.6" r="2.5" fill="#62A089"/><path d="M8.6 12.2C8.6 8.6 10 7 12 7s4 1.6 4 5.2z" fill="#62A089"/><path d="M10.6 7.4l1.4 2.2 1.4-2.2" stroke="#fff" stroke-width="0.7" fill="none"/><circle cx="5.6" cy="6.3" r="2.6" fill="#3C78BE"/><path d="M0.8 15.5C0.8 11.5 2.8 9.8 5.6 9.8s4.8 1.7 4.8 5.7z" fill="#3C78BE"/><path d="M4.3 10.2l1.3 1.6 1.3-1.6" stroke="#fff" stroke-width="0.7" fill="none"/></svg><div class="t" style="left:63px;top:110.84px;font-size:12px;line-height:12px;color:#2B2B2B;letter-spacing:-0.12px">Kontakte - Auswertungen</div><svg style="left:41px;top:127px;" width="17" height="16" viewBox="0 0 17 16"><circle cx="11.6" cy="3.6" r="2.5" fill="#62A089"/><path d="M8.6 12.2C8.6 8.6 10 7 12 7s4 1.6 4 5.2z" fill="#62A089"/><path d="M10.6 7.4l1.4 2.2 1.4-2.2" stroke="#fff" stroke-width="0.7" fill="none"/><circle cx="5.6" cy="6.3" r="2.6" fill="#3C78BE"/><path d="M0.8 15.5C0.8 11.5 2.8 9.8 5.6 9.8s4.8 1.7 4.8 5.7z" fill="#3C78BE"/><path d="M4.3 10.2l1.3 1.6 1.3-1.6" stroke="#fff" stroke-width="0.7" fill="none"/></svg><div class="t" style="left:63px;top:128.84px;font-size:12px;line-height:12px;color:#2B2B2B;letter-spacing:-0.12px">Kontakte - Geburtstagsliste</div><svg style="left:41px;top:145px;" width="17" height="16" viewBox="0 0 17 16"><circle cx="11.6" cy="3.6" r="2.5" fill="#62A089"/><path d="M8.6 12.2C8.6 8.6 10 7 12 7s4 1.6 4 5.2z" fill="#62A089"/><path d="M10.6 7.4l1.4 2.2 1.4-2.2" stroke="#fff" stroke-width="0.7" fill="none"/><circle cx="5.6" cy="6.3" r="2.6" fill="#3C78BE"/><path d="M0.8 15.5C0.8 11.5 2.8 9.8 5.6 9.8s4.8 1.7 4.8 5.7z" fill="#3C78BE"/><path d="M4.3 10.2l1.3 1.6 1.3-1.6" stroke="#fff" stroke-width="0.7" fill="none"/></svg><div class="t" style="left:63px;top:146.84px;font-size:12px;line-height:12px;color:#2B2B2B;letter-spacing:-0.12px">Kontakte - Liste mit Barcode</div><svg style="left:41px;top:163px;" width="17" height="16" viewBox="0 0 17 16"><path transform="rotate(0 8.5 7.5)" d="M8.5 7.5C6.5 6 5 4.5 5.5 2.8 6 1.3 7.8 1.2 8.5 2.5 9.2 1.2 11 1.3 11.5 2.8 12 4.5 10.5 6 8.5 7.5z" fill="#3DAE3F"/><path transform="rotate(90 8.5 7.5)" d="M8.5 7.5C6.5 6 5 4.5 5.5 2.8 6 1.3 7.8 1.2 8.5 2.5 9.2 1.2 11 1.3 11.5 2.8 12 4.5 10.5 6 8.5 7.5z" fill="#3DAE3F"/><path transform="rotate(180 8.5 7.5)" d="M8.5 7.5C6.5 6 5 4.5 5.5 2.8 6 1.3 7.8 1.2 8.5 2.5 9.2 1.2 11 1.3 11.5 2.8 12 4.5 10.5 6 8.5 7.5z" fill="#3DAE3F"/><path transform="rotate(270 8.5 7.5)" d="M8.5 7.5C6.5 6 5 4.5 5.5 2.8 6 1.3 7.8 1.2 8.5 2.5 9.2 1.2 11 1.3 11.5 2.8 12 4.5 10.5 6 8.5 7.5z" fill="#3DAE3F"/><path d="M8.3 8L1 14.8" stroke="#3DAE3F" stroke-width="1.4"/><path d="M6.8 5.8L8.5 7.5M10.2 5.8L8.5 7.5" stroke="#7ED67A" stroke-width="0.6"/></svg><div class="t" style="left:63px;top:164.84px;font-size:12px;line-height:12px;color:#2B2B2B;letter-spacing:-0.12px">Verkaufschancen - Auswertung</div><svg style="left:41px;top:181px;" width="17" height="16" viewBox="0 0 17 16"><path transform="rotate(0 8.5 7.5)" d="M8.5 7.5C6.5 6 5 4.5 5.5 2.8 6 1.3 7.8 1.2 8.5 2.5 9.2 1.2 11 1.3 11.5 2.8 12 4.5 10.5 6 8.5 7.5z" fill="#3DAE3F"/><path transform="rotate(90 8.5 7.5)" d="M8.5 7.5C6.5 6 5 4.5 5.5 2.8 6 1.3 7.8 1.2 8.5 2.5 9.2 1.2 11 1.3 11.5 2.8 12 4.5 10.5 6 8.5 7.5z" fill="#3DAE3F"/><path transform="rotate(180 8.5 7.5)" d="M8.5 7.5C6.5 6 5 4.5 5.5 2.8 6 1.3 7.8 1.2 8.5 2.5 9.2 1.2 11 1.3 11.5 2.8 12 4.5 10.5 6 8.5 7.5z" fill="#3DAE3F"/><path transform="rotate(270 8.5 7.5)" d="M8.5 7.5C6.5 6 5 4.5 5.5 2.8 6 1.3 7.8 1.2 8.5 2.5 9.2 1.2 11 1.3 11.5 2.8 12 4.5 10.5 6 8.5 7.5z" fill="#3DAE3F"/><path d="M8.3 8L1 14.8" stroke="#3DAE3F" stroke-width="1.4"/><path d="M6.8 5.8L8.5 7.5M10.2 5.8L8.5 7.5" stroke="#7ED67A" stroke-width="0.6"/></svg><div class="t" style="left:63px;top:182.84px;font-size:12px;line-height:12px;color:#2B2B2B;letter-spacing:-0.12px">Verkaufschancen - Liste</div><svg style="left:41px;top:199px;" width="17" height="16" viewBox="0 0 17 16"><path d="M5.5 5.6L14.2 4.8" stroke="#5A9E85" stroke-width="2" fill="none"/><path d="M11.6 2.2L14.8 4.8 11.9 7.4" stroke="#5A9E85" stroke-width="2" fill="none" stroke-linecap="round"/><path d="M12 11.2L2.6 12" stroke="#5A9E85" stroke-width="2" fill="none"/><path d="M5.2 9.2L2 11.9 5.2 14.4" stroke="#5A9E85" stroke-width="2" fill="none" stroke-linecap="round"/></svg><div class="t" style="left:63px;top:200.84px;font-size:12px;line-height:12px;color:#2B2B2B;letter-spacing:-0.12px">Aktivit&auml;ten - Auswertung</div><svg style="left:41px;top:217px;" width="17" height="16" viewBox="0 0 17 16"><path d="M5.5 5.6L14.2 4.8" stroke="#5A9E85" stroke-width="2" fill="none"/><path d="M11.6 2.2L14.8 4.8 11.9 7.4" stroke="#5A9E85" stroke-width="2" fill="none" stroke-linecap="round"/><path d="M12 11.2L2.6 12" stroke="#5A9E85" stroke-width="2" fill="none"/><path d="M5.2 9.2L2 11.9 5.2 14.4" stroke="#5A9E85" stroke-width="2" fill="none" stroke-linecap="round"/></svg><div class="t" style="left:63px;top:218.84px;font-size:12px;line-height:12px;color:#2B2B2B;letter-spacing:-0.12px">Aktivit&auml;ten - Auswertung</div><svg style="left:41px;top:235px;" width="16" height="16" viewBox="0 0 16 16"><rect x="1" y="5" width="10" height="10" fill="#fff" stroke="#777"/><rect x="1" y="5" width="10" height="2" fill="#777"/><path d="M1 10h10M1 12.5h10M4.5 7v8M8 7v8" stroke="#BDBDBD" stroke-width="0.8"/><path d="M3 11h4" stroke="#E06040" stroke-width="1.3"/><path d="M5 13.5h5" stroke="#3F7CC0" stroke-width="1.3"/><circle cx="12" cy="5" r="3.5" fill="#fff" stroke="#3F7CC0"/><path d="M12 3v2.2l1.3 1" stroke="#3F7CC0" fill="none" stroke-width="0.9"/><path d="M11 0.8h2" stroke="#3F7CC0"/></svg><div class="t" style="left:63px;top:236.84px;font-size:12px;line-height:12px;color:#2B2B2B;letter-spacing:-0.12px">Projekte - Stammblatt</div><svg style="left:41px;top:253px;" width="16" height="16" viewBox="0 0 16 16"><path d="M0.5 1.5h2.5l2 9h9" fill="none" stroke="#6A6A6A" stroke-width="1.4"/><path d="M3.5 4h12l-1 2.2H4M4.3 7.3h10L13.7 9H4.7" fill="none" stroke="#6A6A6A" stroke-width="1.4"/><circle cx="6" cy="13.5" r="1.4" fill="#6A6A6A"/><circle cx="12.5" cy="13.5" r="1.4" fill="#6A6A6A"/></svg><div class="t" style="left:63px;top:254.84px;font-size:12px;line-height:12px;color:#2B2B2B;letter-spacing:-0.12px">Belege - Auswertungen</div><svg style="left:41px;top:271px;" width="16" height="16" viewBox="0 0 16 16"><path d="M0.5 1.5h2.5l2 9h9" fill="none" stroke="#6A6A6A" stroke-width="1.4"/><path d="M3.5 4h12l-1 2.2H4M4.3 7.3h10L13.7 9H4.7" fill="none" stroke="#6A6A6A" stroke-width="1.4"/><circle cx="6" cy="13.5" r="1.4" fill="#6A6A6A"/><circle cx="12.5" cy="13.5" r="1.4" fill="#6A6A6A"/></svg><div class="t" style="left:63px;top:272.84px;font-size:12px;line-height:12px;color:#2B2B2B;letter-spacing:-0.12px">Belege - Rechnungs&uuml;bersicht</div><svg style="left:41px;top:289px;" width="16" height="16" viewBox="0 0 16 16"><path d="M0.5 1.5h2.5l2 9h9" fill="none" stroke="#6A6A6A" stroke-width="1.4"/><path d="M3.5 4h12l-1 2.2H4M4.3 7.3h10L13.7 9H4.7" fill="none" stroke="#6A6A6A" stroke-width="1.4"/><circle cx="6" cy="13.5" r="1.4" fill="#6A6A6A"/><circle cx="12.5" cy="13.5" r="1.4" fill="#6A6A6A"/></svg><div class="t" style="left:63px;top:290.84px;font-size:12px;line-height:12px;color:#2B2B2B;letter-spacing:-0.12px">Belege - Rechnungs&uuml;bersicht</div><svg style="left:41px;top:307px;" width="16" height="16" viewBox="0 0 16 16"><path d="M8 1L14.5 4v8L8 15 1.5 12V4z" fill="#3F7CC0"/><path d="M1.5 4L8 7l6.5-3M8 7v8" stroke="#fff" stroke-width="0.9" fill="none"/></svg><div class="t" style="left:63px;top:308.84px;font-size:12px;line-height:12px;color:#2B2B2B;letter-spacing:-0.12px">Produkte - Stammblatt</div></div>
<div class="box" style="left:195px;top:659px;width:16px;height:337px;background:#F0F0F0;"></div>
<div class="box" style="left:202px;top:677px;width:2px;height:285px;background:#7A7A7A;"></div>
<div class="box" style="left:1px;top:996px;width:210px;height:16px;background:#F0F0F0;"></div>
<div class="box" style="left:17px;top:1003px;width:113px;height:2px;background:#7A7A7A;"></div>
<svg style="left:218px;top:152px;" width="150" height="24" viewBox="0 0 150 24"><path d="M3.5 21.5L23.5 3.5h84.5q1.5 0 1.5 1.5v16.5" fill="#FFB46E" stroke="none"/><path d="M3.2 21.5L23 3.5h84.8q1.6 0 1.6 1.6v16.4" fill="none" stroke="#8C8C8C" stroke-width="1"/><path d="M109.5 21.5V7l5-3.5h21.5q1.5 0 1.5 1.5v16.5" fill="#fff" stroke="#8C8C8C" stroke-width="1"/></svg>
<div class="box" style="left:224px;top:157px;width:102px;height:17px;background:#FFB46E;clip-path:polygon(17px 0,102px 0,102px 17px,0 17px)"></div>
<svg style="left:240px;top:157px;" width="16" height="16" viewBox="0 0 16 16"><path d="M1.5 8.2L8 2l6.5 6.2" fill="none" stroke="#E0603F" stroke-width="2"/><path d="M3.5 7.5v6.5h9V7.5" fill="#fff" stroke="#6A6A6A" stroke-width="1.1"/><rect x="6.8" y="9" width="2.4" height="4.5" fill="#E6B36A"/><path d="M12 2.5l0.8 1.8" stroke="#E02020" stroke-width="1.4"/></svg>
<div class="t" style="left:263.28px;top:158.84px;font-size:12px;line-height:12px;color:#111;letter-spacing:-0.104px;font-weight:bold;">Firmen</div>
<svg style="left:314px;top:161px;" width="8" height="8" viewBox="0 0 8 8"><path d="M0.5 0.5L7.5 7.5M7.5 0.5L0.5 7.5" stroke="#111" stroke-width="1.3"/></svg>
<div class="box" style="left:337px;top:163px;width:10px;height:2px;background:#666;"></div>
<div class="box" style="left:341px;top:159px;width:2px;height:10px;background:#666;"></div>
<svg style="left:1590px;top:160px;" width="8" height="5" viewBox="0 0 8 5"><path d="M0 0h8L4 4.5z" fill="#6A6A6A"/></svg>
<svg style="left:1604px;top:158px;" width="8" height="8" viewBox="0 0 8 8"><path d="M0.5 0.5L7.5 7.5M7.5 0.5L0.5 7.5" stroke="#444" stroke-width="1.1"/></svg>
<div class="box" style="left:218px;top:175px;width:1397px;height:1px;background:#D6D6D6;"></div>
<div class="box" style="left:217px;top:176px;width:1px;height:815px;background:#D8D8D8;"></div>
<div class="box" style="left:218px;top:990px;width:172px;height:1px;background:#D0D0D0;"></div>
<div class="box" style="left:391px;top:990px;width:1224px;height:1px;background:#D8D8D8;"></div>
<div class="box" style="left:367px;top:176px;width:16px;height:814px;background:#F0F0F0;"></div>
<svg style="left:370px;top:181px;" width="10" height="7" viewBox="0 0 10 7"><path d="M0.5 6.5L5 1l4.5 5.5z" fill="#9A9A9A"/></svg>
<svg style="left:370px;top:979px;" width="10" height="7" viewBox="0 0 10 7"><path d="M0.5 0.5L5 6l4.5-5.5z" fill="#9A9A9A"/></svg>
<div class="box" style="left:390px;top:176px;width:1px;height:815px;background:#9C9C9C;"></div>
<div class="box" style="left:383px;top:986px;width:7px;height:1px;background:#C8C8C8;"></div>
<div class="box" style="left:391px;top:176px;width:1224px;height:814px;background:#F0F0F0;"></div>
<div class="box" style="left:1614px;top:176px;width:1px;height:814px;background:#DADADA;"></div>
<div class="box" style="left:1597px;top:176px;width:1px;height:814px;background:#FFFFFF;"></div>
<div class="box" style="left:1606px;top:193px;width:2px;height:197px;background:#7A7A7A;"></div>
<div class="box" style="left:421px;top:176px;width:1145px;height:814px;background:#FFAD5F;"></div>
<div class="box" style="left:425px;top:180px;width:1137px;height:806px;background:#FFFFFF;box-shadow:inset 0 0 0 1px #D9DEE6"></div>
<div class="box" style="left:0;top:0;width:1920px;height:1032px;overflow:visible"><div class="t" style="left:482.6px;top:223.30px;font-size:28px;line-height:28px;color:#111111;transform:scaleX(0.8936);transform-origin:0 0;font-weight:bold;">sunshine agency</div><div class="t" style="left:481.80px;top:257.46px;font-size:16px;line-height:16px;color:#111111;letter-spacing:-0.128px;">Stand: 18.02.2025</div><div class="box" style="left:1407px;top:220px;width:116.5px;height:48px;background:#8A8A8A;"></div><svg style="left:1407px;top:266px;" width="117" height="4" viewBox="0 0 117 4"><circle cx="2.00" cy="1.5" r="1.4" fill="#8A8A8A"/><circle cx="7.83" cy="1.5" r="1.4" fill="#8A8A8A"/><circle cx="13.66" cy="1.5" r="1.4" fill="#8A8A8A"/><circle cx="19.49" cy="1.5" r="1.4" fill="#8A8A8A"/><circle cx="25.32" cy="1.5" r="1.4" fill="#8A8A8A"/><circle cx="31.15" cy="1.5" r="1.4" fill="#8A8A8A"/><circle cx="36.98" cy="1.5" r="1.4" fill="#8A8A8A"/><circle cx="42.81" cy="1.5" r="1.4" fill="#8A8A8A"/><circle cx="48.64" cy="1.5" r="1.4" fill="#8A8A8A"/><circle cx="54.47" cy="1.5" r="1.4" fill="#8A8A8A"/><circle cx="60.30" cy="1.5" r="1.4" fill="#8A8A8A"/><circle cx="66.13" cy="1.5" r="1.4" fill="#8A8A8A"/><circle cx="71.96" cy="1.5" r="1.4" fill="#8A8A8A"/><circle cx="77.79" cy="1.5" r="1.4" fill="#8A8A8A"/><circle cx="83.62" cy="1.5" r="1.4" fill="#8A8A8A"/><circle cx="89.45" cy="1.5" r="1.4" fill="#8A8A8A"/><circle cx="95.28" cy="1.5" r="1.4" fill="#8A8A8A"/><circle cx="101.11" cy="1.5" r="1.4" fill="#8A8A8A"/><circle cx="106.94" cy="1.5" r="1.4" fill="#8A8A8A"/><circle cx="112.77" cy="1.5" r="1.4" fill="#8A8A8A"/></svg><div class="t" style="left:1408.5px;top:244.14px;font-size:25px;line-height:25px;color:#FFFFFF;transform:scaleX(0.8863);transform-origin:0 0;font-weight:bold;">SUNSHINE</div><svg style="left:1485px;top:238px;" width="8" height="8" viewBox="0 0 8 8"><circle cx="3.7" cy="3.3" r="3.1" fill="#fff"/></svg><div class="box" style="left:1483px;top:244px;width:12px;height:3.5px;background:#8A8A8A;"></div><div class="t" style="left:1408px;top:263.31px;font-size:30px;line-height:30px;color:#111;transform:scaleX(1.1682);transform-origin:0 0;">agency</div><div class="t" style="left:481.44px;top:932.64px;font-size:12px;line-height:12px;color:#111111;letter-spacing:0.203px;">Erstellt am 18.02.2025 um 12:17 Uhr von Oliver Schillinger</div><div class="t" style="left:1452.20px;top:932.74px;font-size:12px;line-height:12px;color:#111111;letter-spacing:0.115px;">Seite 1 von 4</div><div class="box" style="left:482px;top:354px;width:519px;height:19px;background:#DADADA;"></div><div class="box" style="left:1005px;top:354px;width:518px;height:19px;background:#DADADA;"></div><div class="t" style="left:485.28px;top:357.84px;font-size:12px;line-height:12px;color:#111111;letter-spacing:0.017px;font-weight:bold;">Branchen</div><div class="t" style="left:1008.76px;top:357.84px;font-size:12px;line-height:12px;color:#111111;letter-spacing:-0.393px;font-weight:bold;">ABC-Kategorisierung</div><svg style="left:700px;top:400px;" width="300" height="300" viewBox="0 0 300 300"><path d="M31.43 68.27A104 104 0 0 1 169.42 184.06L117.23 174.86A51 51 0 0 0 49.56 118.08Z" fill="#E84659" stroke="#E84659" stroke-width="0.6"/><path d="M169.42 184.06A104 104 0 0 1 73.60 269.79L70.23 216.90A51 51 0 0 0 117.23 174.86Z" fill="#F2A12B" stroke="#F2A12B" stroke-width="0.6"/><path d="M73.60 269.79A104 104 0 0 1 0.15 245.67L34.22 205.07A51 51 0 0 0 70.23 216.90Z" fill="#F2E683" stroke="#F2E683" stroke-width="0.6"/><path d="M0.15 245.67A104 104 0 0 1 -24.67 215.12L22.05 190.09A51 51 0 0 0 34.22 205.07Z" fill="#82C06E" stroke="#82C06E" stroke-width="0.6"/><path d="M-24.67 215.12A104 104 0 0 1 -36.36 177.53L16.31 171.65A51 51 0 0 0 22.05 190.09Z" fill="#3AB3CC" stroke="#3AB3CC" stroke-width="0.6"/><path d="M-36.36 177.53A104 104 0 0 1 -33.24 138.29L17.84 152.41A51 51 0 0 0 16.31 171.65Z" fill="#8C6497" stroke="#8C6497" stroke-width="0.6"/><path d="M-33.24 138.29A104 104 0 0 1 -15.76 103.02L26.42 135.11A51 51 0 0 0 17.84 152.41Z" fill="#1C4670" stroke="#1C4670" stroke-width="0.6"/><path d="M-15.76 103.02A104 104 0 0 1 -2.34 88.49L32.99 127.99A51 51 0 0 0 26.42 135.11Z" fill="#C6C6C6" stroke="#C6C6C6" stroke-width="0.6"/><path d="M-2.34 88.49A104 104 0 0 1 13.58 76.77L40.80 122.24A51 51 0 0 0 32.99 127.99Z" fill="#9B7762" stroke="#9B7762" stroke-width="0.6"/><path d="M13.58 76.77A104 104 0 0 1 31.43 68.27L49.56 118.08A51 51 0 0 0 40.80 122.24Z" fill="#1A1A1A" stroke="#1A1A1A" stroke-width="0.6"/><path d="M8.600000000000023 60L16.600000000000023 60L23 71.60000000000002" fill="none" stroke="#222" stroke-width="1"/><path d="M-10 75L3 75L8 82" fill="none" stroke="#222" stroke-width="1"/><path d="M-25 91L-10 91L-5 98" fill="none" stroke="#222" stroke-width="1"/><path d="M-43 117L-23 117L-18 122" fill="none" stroke="#222" stroke-width="1"/><path d="M-54 156L-37 156L-37 156" fill="none" stroke="#222" stroke-width="1"/><path d="M-49 197L-35 197L-31 191" fill="none" stroke="#222" stroke-width="1"/><path d="M-30 233L-15 233L-10 226" fill="none" stroke="#222" stroke-width="1"/><path d="M21 268L32 268L35 261" fill="none" stroke="#222" stroke-width="1"/><path d="M151 246L140 246L135 240" fill="none" stroke="#222" stroke-width="1"/><path d="M148 82L138 82L134 86" fill="none" stroke="#222" stroke-width="1"/></svg><div class="t" style="left:605.70px;top:453.84px;font-size:12px;line-height:12px;color:#111111;letter-spacing:-0.112px;">Gesundheitswesen</div><div class="t" style="left:641.34px;top:468.84px;font-size:12px;line-height:12px;color:#111111;letter-spacing:-0.220px;">Finanzen</div><div class="t" style="left:536.50px;top:484.84px;font-size:12px;line-height:12px;color:#111111;letter-spacing:-0.005px;">Auto, Verkehr + Transport</div><div class="t" style="left:580.04px;top:510.54px;font-size:12px;line-height:12px;color:#111111;letter-spacing:-0.049px;">Kunst + Kultur</div><div class="t" style="left:634.22px;top:549.54px;font-size:12px;line-height:12px;color:#111111;letter-spacing:-1.060px;">IT</div><div class="t" style="left:515.80px;top:590.64px;font-size:12px;line-height:12px;color:#111111;letter-spacing:0.115px;">Grosshandel/Distribution</div><div class="t" style="left:542.34px;top:626.34px;font-size:12px;line-height:12px;color:#111111;letter-spacing:-0.025px;">Baugewerbe + Industrie</div><div class="t" style="left:651.44px;top:661.64px;font-size:12px;line-height:12px;color:#111111;letter-spacing:-0.069px;">Einzelhandel</div><div class="t" style="left:851.76px;top:639.44px;font-size:12px;line-height:12px;color:#111111;letter-spacing:0.213px;">Touristik</div><div class="t" style="left:848.64px;top:475.84px;font-size:12px;line-height:12px;color:#111111;letter-spacing:0.027px;">Dienstleistungen</div><div class="t" style="left:716.15px;top:499.84px;width:200px;text-align:center;font-size:12px;line-height:12px;color:#111111;">33%</div><div class="t" style="left:717.25px;top:616.34px;width:200px;text-align:center;font-size:12px;line-height:12px;color:#111111;">21%</div><div class="t" style="left:641.75px;top:632.64px;width:200px;text-align:center;font-size:12px;line-height:12px;color:#111111;">12%</div><div class="t" style="left:607.0px;top:607.54px;width:200px;text-align:center;font-size:12px;line-height:12px;color:#111111;">6%</div><div class="t" style="left:592.0px;top:581.54px;width:200px;text-align:center;font-size:12px;line-height:12px;color:#111111;">6%</div><div class="t" style="left:589.0px;top:552.84px;width:200px;text-align:center;font-size:12px;line-height:12px;color:#111111;">6%</div><div class="t" style="left:597.5px;top:524.34px;width:200px;text-align:center;font-size:12px;line-height:12px;color:#fff;">6%</div><div class="t" style="left:609.25px;top:506.84px;width:200px;text-align:center;font-size:12px;line-height:12px;color:#111111;">3%</div><div class="t" style="left:619.3px;top:496.64px;width:200px;text-align:center;font-size:12px;line-height:12px;color:#111111;">3%</div><div class="t" style="left:632.0px;top:486.64px;width:200px;text-align:center;font-size:12px;line-height:12px;color:#fff;">3%</div><svg style="left:1100px;top:400px;" width="320" height="320" viewBox="0 0 320 320"><path d="M125.30 53.68A119 119 0 1 1 52.37 200.83L109.66 183.02A59 59 0 1 0 145.82 110.06Z" fill="#E84659" stroke="#E84659" stroke-width="0.6"/><path d="M52.37 200.83A119 119 0 0 1 71.30 93.43L119.05 129.77A59 59 0 0 0 109.66 183.02Z" fill="#F2A12B" stroke="#F2A12B" stroke-width="0.6"/><path d="M71.30 93.43A119 119 0 0 1 125.30 53.68L145.82 110.06A59 59 0 0 0 119.05 129.77Z" fill="#F2E683" stroke="#F2E683" stroke-width="0.6"/><path d="M80 65L93 65L97 71" fill="none" stroke="#222" stroke-width="1"/><path d="M31 144L43 144L48 146" fill="none" stroke="#222" stroke-width="1"/><path d="M290 221L278 221L273 218" fill="none" stroke="#222" stroke-width="1"/></svg><div class="t" style="left:1072.4499999999998px;top:458.54px;width:200px;text-align:center;font-size:12px;line-height:12px;color:#111111;">B</div><div class="t" style="left:1023.5500000000002px;top:538.04px;width:200px;text-align:center;font-size:12px;line-height:12px;color:#111111;">A</div><div class="t" style="left:1293.9px;top:614.64px;width:200px;text-align:center;font-size:12px;line-height:12px;color:#111111;">C</div><div class="t" style="left:1111.5px;top:486.54px;width:200px;text-align:center;font-size:12px;line-height:12px;color:#111111;">9%</div><div class="t" style="left:1076.7px;top:544.04px;width:200px;text-align:center;font-size:12px;line-height:12px;color:#111111;">15%</div><div class="t" style="left:1244.25px;top:598.94px;width:200px;text-align:center;font-size:12px;line-height:12px;color:#111111;">76%</div></div>
<div class="box" style="left:219px;top:178px;width:146px;height:106px;background:#FFAD5F;"></div>
<div class="box" style="left:223px;top:182px;width:138px;height:98px;background:#fff;overflow:hidden;box-shadow:inset 0 0 0 1px #C8CCD2"><div class="box" style="left:0;top:0;width:1920px;height:1032px;transform-origin:0 0;transform:scale(0.12137) translate(-425px,-180px)"><div class="t" style="left:482.6px;top:223.30px;font-size:28px;line-height:28px;color:#111111;transform:scaleX(0.8936);transform-origin:0 0;font-weight:bold;">sunshine agency</div><div class="t" style="left:481.80px;top:257.46px;font-size:16px;line-height:16px;color:#111111;letter-spacing:-0.128px;">Stand: 18.02.2025</div><div class="box" style="left:1407px;top:220px;width:116.5px;height:48px;background:#8A8A8A;"></div><svg style="left:1407px;top:266px;" width="117" height="4" viewBox="0 0 117 4"><circle cx="2.00" cy="1.5" r="1.4" fill="#8A8A8A"/><circle cx="7.83" cy="1.5" r="1.4" fill="#8A8A8A"/><circle cx="13.66" cy="1.5" r="1.4" fill="#8A8A8A"/><circle cx="19.49" cy="1.5" r="1.4" fill="#8A8A8A"/><circle cx="25.32" cy="1.5" r="1.4" fill="#8A8A8A"/><circle cx="31.15" cy="1.5" r="1.4" fill="#8A8A8A"/><circle cx="36.98" cy="1.5" r="1.4" fill="#8A8A8A"/><circle cx="42.81" cy="1.5" r="1.4" fill="#8A8A8A"/><circle cx="48.64" cy="1.5" r="1.4" fill="#8A8A8A"/><circle cx="54.47" cy="1.5" r="1.4" fill="#8A8A8A"/><circle cx="60.30" cy="1.5" r="1.4" fill="#8A8A8A"/><circle cx="66.13" cy="1.5" r="1.4" fill="#8A8A8A"/><circle cx="71.96" cy="1.5" r="1.4" fill="#8A8A8A"/><circle cx="77.79" cy="1.5" r="1.4" fill="#8A8A8A"/><circle cx="83.62" cy="1.5" r="1.4" fill="#8A8A8A"/><circle cx="89.45" cy="1.5" r="1.4" fill="#8A8A8A"/><circle cx="95.28" cy="1.5" r="1.4" fill="#8A8A8A"/><circle cx="101.11" cy="1.5" r="1.4" fill="#8A8A8A"/><circle cx="106.94" cy="1.5" r="1.4" fill="#8A8A8A"/><circle cx="112.77" cy="1.5" r="1.4" fill="#8A8A8A"/></svg><div class="t" style="left:1408.5px;top:244.14px;font-size:25px;line-height:25px;color:#FFFFFF;transform:scaleX(0.8863);transform-origin:0 0;font-weight:bold;">SUNSHINE</div><svg style="left:1485px;top:238px;" width="8" height="8" viewBox="0 0 8 8"><circle cx="3.7" cy="3.3" r="3.1" fill="#fff"/></svg><div class="box" style="left:1483px;top:244px;width:12px;height:3.5px;background:#8A8A8A;"></div><div class="t" style="left:1408px;top:263.31px;font-size:30px;line-height:30px;color:#111;transform:scaleX(1.1682);transform-origin:0 0;">agency</div><div class="t" style="left:481.44px;top:932.64px;font-size:12px;line-height:12px;color:#111111;letter-spacing:0.203px;">Erstellt am 18.02.2025 um 12:17 Uhr von Oliver Schillinger</div><div class="t" style="left:1452.20px;top:932.74px;font-size:12px;line-height:12px;color:#111111;letter-spacing:0.115px;">Seite 1 von 4</div><div class="box" style="left:482px;top:354px;width:519px;height:19px;background:#DADADA;"></div><div class="box" style="left:1005px;top:354px;width:518px;height:19px;background:#DADADA;"></div><div class="t" style="left:485.28px;top:357.84px;font-size:12px;line-height:12px;color:#111111;letter-spacing:0.017px;font-weight:bold;">Branchen</div><div class="t" style="left:1008.76px;top:357.84px;font-size:12px;line-height:12px;color:#111111;letter-spacing:-0.393px;font-weight:bold;">ABC-Kategorisierung</div><svg style="left:700px;top:400px;" width="300" height="300" viewBox="0 0 300 300"><path d="M31.43 68.27A104 104 0 0 1 169.42 184.06L117.23 174.86A51 51 0 0 0 49.56 118.08Z" fill="#E84659" stroke="#E84659" stroke-width="0.6"/><path d="M169.42 184.06A104 104 0 0 1 73.60 269.79L70.23 216.90A51 51 0 0 0 117.23 174.86Z" fill="#F2A12B" stroke="#F2A12B" stroke-width="0.6"/><path d="M73.60 269.79A104 104 0 0 1 0.15 245.67L34.22 205.07A51 51 0 0 0 70.23 216.90Z" fill="#F2E683" stroke="#F2E683" stroke-width="0.6"/><path d="M0.15 245.67A104 104 0 0 1 -24.67 215.12L22.05 190.09A51 51 0 0 0 34.22 205.07Z" fill="#82C06E" stroke="#82C06E" stroke-width="0.6"/><path d="M-24.67 215.12A104 104 0 0 1 -36.36 177.53L16.31 171.65A51 51 0 0 0 22.05 190.09Z" fill="#3AB3CC" stroke="#3AB3CC" stroke-width="0.6"/><path d="M-36.36 177.53A104 104 0 0 1 -33.24 138.29L17.84 152.41A51 51 0 0 0 16.31 171.65Z" fill="#8C6497" stroke="#8C6497" stroke-width="0.6"/><path d="M-33.24 138.29A104 104 0 0 1 -15.76 103.02L26.42 135.11A51 51 0 0 0 17.84 152.41Z" fill="#1C4670" stroke="#1C4670" stroke-width="0.6"/><path d="M-15.76 103.02A104 104 0 0 1 -2.34 88.49L32.99 127.99A51 51 0 0 0 26.42 135.11Z" fill="#C6C6C6" stroke="#C6C6C6" stroke-width="0.6"/><path d="M-2.34 88.49A104 104 0 0 1 13.58 76.77L40.80 122.24A51 51 0 0 0 32.99 127.99Z" fill="#9B7762" stroke="#9B7762" stroke-width="0.6"/><path d="M13.58 76.77A104 104 0 0 1 31.43 68.27L49.56 118.08A51 51 0 0 0 40.80 122.24Z" fill="#1A1A1A" stroke="#1A1A1A" stroke-width="0.6"/><path d="M8.600000000000023 60L16.600000000000023 60L23 71.60000000000002" fill="none" stroke="#222" stroke-width="1"/><path d="M-10 75L3 75L8 82" fill="none" stroke="#222" stroke-width="1"/><path d="M-25 91L-10 91L-5 98" fill="none" stroke="#222" stroke-width="1"/><path d="M-43 117L-23 117L-18 122" fill="none" stroke="#222" stroke-width="1"/><path d="M-54 156L-37 156L-37 156" fill="none" stroke="#222" stroke-width="1"/><path d="M-49 197L-35 197L-31 191" fill="none" stroke="#222" stroke-width="1"/><path d="M-30 233L-15 233L-10 226" fill="none" stroke="#222" stroke-width="1"/><path d="M21 268L32 268L35 261" fill="none" stroke="#222" stroke-width="1"/><path d="M151 246L140 246L135 240" fill="none" stroke="#222" stroke-width="1"/><path d="M148 82L138 82L134 86" fill="none" stroke="#222" stroke-width="1"/></svg><div class="t" style="left:605.70px;top:453.84px;font-size:12px;line-height:12px;color:#111111;letter-spacing:-0.112px;">Gesundheitswesen</div><div class="t" style="left:641.34px;top:468.84px;font-size:12px;line-height:12px;color:#111111;letter-spacing:-0.220px;">Finanzen</div><div class="t" style="left:536.50px;top:484.84px;font-size:12px;line-height:12px;color:#111111;letter-spacing:-0.005px;">Auto, Verkehr + Transport</div><div class="t" style="left:580.04px;top:510.54px;font-size:12px;line-height:12px;color:#111111;letter-spacing:-0.049px;">Kunst + Kultur</div><div class="t" style="left:634.22px;top:549.54px;font-size:12px;line-height:12px;color:#111111;letter-spacing:-1.060px;">IT</div><div class="t" style="left:515.80px;top:590.64px;font-size:12px;line-height:12px;color:#111111;letter-spacing:0.115px;">Grosshandel/Distribution</div><div class="t" style="left:542.34px;top:626.34px;font-size:12px;line-height:12px;color:#111111;letter-spacing:-0.025px;">Baugewerbe + Industrie</div><div class="t" style="left:651.44px;top:661.64px;font-size:12px;line-height:12px;color:#111111;letter-spacing:-0.069px;">Einzelhandel</div><div class="t" style="left:851.76px;top:639.44px;font-size:12px;line-height:12px;color:#111111;letter-spacing:0.213px;">Touristik</div><div class="t" style="left:848.64px;top:475.84px;font-size:12px;line-height:12px;color:#111111;letter-spacing:0.027px;">Dienstleistungen</div><div class="t" style="left:716.15px;top:499.84px;width:200px;text-align:center;font-size:12px;line-height:12px;color:#111111;">33%</div><div class="t" style="left:717.25px;top:616.34px;width:200px;text-align:center;font-size:12px;line-height:12px;color:#111111;">21%</div><div class="t" style="left:641.75px;top:632.64px;width:200px;text-align:center;font-size:12px;line-height:12px;color:#111111;">12%</div><div class="t" style="left:607.0px;top:607.54px;width:200px;text-align:center;font-size:12px;line-height:12px;color:#111111;">6%</div><div class="t" style="left:592.0px;top:581.54px;width:200px;text-align:center;font-size:12px;line-height:12px;color:#111111;">6%</div><div class="t" style="left:589.0px;top:552.84px;width:200px;text-align:center;font-size:12px;line-height:12px;color:#111111;">6%</div><div class="t" style="left:597.5px;top:524.34px;width:200px;text-align:center;font-size:12px;line-height:12px;color:#fff;">6%</div><div class="t" style="left:609.25px;top:506.84px;width:200px;text-align:center;font-size:12px;line-height:12px;color:#111111;">3%</div><div class="t" style="left:619.3px;top:496.64px;width:200px;text-align:center;font-size:12px;line-height:12px;color:#111111;">3%</div><div class="t" style="left:632.0px;top:486.64px;width:200px;text-align:center;font-size:12px;line-height:12px;color:#fff;">3%</div><svg style="left:1100px;top:400px;" width="320" height="320" viewBox="0 0 320 320"><path d="M125.30 53.68A119 119 0 1 1 52.37 200.83L109.66 183.02A59 59 0 1 0 145.82 110.06Z" fill="#E84659" stroke="#E84659" stroke-width="0.6"/><path d="M52.37 200.83A119 119 0 0 1 71.30 93.43L119.05 129.77A59 59 0 0 0 109.66 183.02Z" fill="#F2A12B" stroke="#F2A12B" stroke-width="0.6"/><path d="M71.30 93.43A119 119 0 0 1 125.30 53.68L145.82 110.06A59 59 0 0 0 119.05 129.77Z" fill="#F2E683" stroke="#F2E683" stroke-width="0.6"/><path d="M80 65L93 65L97 71" fill="none" stroke="#222" stroke-width="1"/><path d="M31 144L43 144L48 146" fill="none" stroke="#222" stroke-width="1"/><path d="M290 221L278 221L273 218" fill="none" stroke="#222" stroke-width="1"/></svg><div class="t" style="left:1072.4499999999998px;top:458.54px;width:200px;text-align:center;font-size:12px;line-height:12px;color:#111111;">B</div><div class="t" style="left:1023.5500000000002px;top:538.04px;width:200px;text-align:center;font-size:12px;line-height:12px;color:#111111;">A</div><div class="t" style="left:1293.9px;top:614.64px;width:200px;text-align:center;font-size:12px;line-height:12px;color:#111111;">C</div><div class="t" style="left:1111.5px;top:486.54px;width:200px;text-align:center;font-size:12px;line-height:12px;color:#111111;">9%</div><div class="t" style="left:1076.7px;top:544.04px;width:200px;text-align:center;font-size:12px;line-height:12px;color:#111111;">15%</div><div class="t" style="left:1244.25px;top:598.94px;width:200px;text-align:center;font-size:12px;line-height:12px;color:#111111;">76%</div></div></div>
<div class="t" style="left:192px;top:285.84px;width:200px;text-align:center;font-size:12px;line-height:12px;color:#222;">1</div>
<div class="box" style="left:225px;top:312px;width:138px;height:97px;background:rgba(0,0,0,0.10);"></div>
<div class="box" style="left:223px;top:310px;width:138px;height:97px;background:#fff;overflow:hidden;box-shadow:inset 0 0 0 1px #C8CCD2"><div class="box" style="left:0;top:0;width:1920px;height:1032px;transform-origin:0 0;transform:scale(0.12137) translate(-425px,-180px)"><div class="t" style="left:482.6px;top:223.30px;font-size:28px;line-height:28px;color:#111111;transform:scaleX(0.8936);transform-origin:0 0;font-weight:bold;">sunshine agency</div><div class="t" style="left:481.80px;top:257.46px;font-size:16px;line-height:16px;color:#111111;letter-spacing:-0.128px;">Stand: 18.02.2025</div><div class="box" style="left:1407px;top:220px;width:116.5px;height:48px;background:#8A8A8A;"></div><svg style="left:1407px;top:266px;" width="117" height="4" viewBox="0 0 117 4"><circle cx="2.00" cy="1.5" r="1.4" fill="#8A8A8A"/><circle cx="7.83" cy="1.5" r="1.4" fill="#8A8A8A"/><circle cx="13.66" cy="1.5" r="1.4" fill="#8A8A8A"/><circle cx="19.49" cy="1.5" r="1.4" fill="#8A8A8A"/><circle cx="25.32" cy="1.5" r="1.4" fill="#8A8A8A"/><circle cx="31.15" cy="1.5" r="1.4" fill="#8A8A8A"/><circle cx="36.98" cy="1.5" r="1.4" fill="#8A8A8A"/><circle cx="42.81" cy="1.5" r="1.4" fill="#8A8A8A"/><circle cx="48.64" cy="1.5" r="1.4" fill="#8A8A8A"/><circle cx="54.47" cy="1.5" r="1.4" fill="#8A8A8A"/><circle cx="60.30" cy="1.5" r="1.4" fill="#8A8A8A"/><circle cx="66.13" cy="1.5" r="1.4" fill="#8A8A8A"/><circle cx="71.96" cy="1.5" r="1.4" fill="#8A8A8A"/><circle cx="77.79" cy="1.5" r="1.4" fill="#8A8A8A"/><circle cx="83.62" cy="1.5" r="1.4" fill="#8A8A8A"/><circle cx="89.45" cy="1.5" r="1.4" fill="#8A8A8A"/><circle cx="95.28" cy="1.5" r="1.4" fill="#8A8A8A"/><circle cx="101.11" cy="1.5" r="1.4" fill="#8A8A8A"/><circle cx="106.94" cy="1.5" r="1.4" fill="#8A8A8A"/><circle cx="112.77" cy="1.5" r="1.4" fill="#8A8A8A"/></svg><div class="t" style="left:1408.5px;top:244.14px;font-size:25px;line-height:25px;color:#FFFFFF;transform:scaleX(0.8863);transform-origin:0 0;font-weight:bold;">SUNSHINE</div><svg style="left:1485px;top:238px;" width="8" height="8" viewBox="0 0 8 8"><circle cx="3.7" cy="3.3" r="3.1" fill="#fff"/></svg><div class="box" style="left:1483px;top:244px;width:12px;height:3.5px;background:#8A8A8A;"></div><div class="t" style="left:1408px;top:263.31px;font-size:30px;line-height:30px;color:#111;transform:scaleX(1.1682);transform-origin:0 0;">agency</div><div class="t" style="left:481.44px;top:932.64px;font-size:12px;line-height:12px;color:#111111;letter-spacing:0.203px;">Erstellt am 18.02.2025 um 12:17 Uhr von Oliver Schillinger</div><div class="t" style="left:1452.20px;top:932.74px;font-size:12px;line-height:12px;color:#111111;letter-spacing:0.115px;">Seite 2 von 4</div><div class="box" style="left:482px;top:354px;width:519px;height:19px;background:#DADADA;"></div><div class="box" style="left:1005px;top:354px;width:518px;height:19px;background:#DADADA;"></div><div class="t" style="left:486px;top:357.84px;font-size:12px;line-height:12px;color:#111111;font-weight:bold;">Firmen nach Status</div><div class="t" style="left:1009px;top:357.84px;font-size:12px;line-height:12px;color:#111111;font-weight:bold;">Umsatzklassen</div><svg style="left:700px;top:400px;" width="800" height="320" viewBox="0 0 800 320"><path d="M20.23 52.32A119 119 0 1 1 2.98 271.53L30.21 218.07A59 59 0 1 0 38.77 109.39Z" fill="#E84659" stroke="#E84659" stroke-width="0.6"/><path d="M2.98 271.53A119 119 0 0 1 -56.80 200.29L0.58 182.75A59 59 0 0 0 30.21 218.07Z" fill="#F2A12B" stroke="#F2A12B" stroke-width="0.6"/><path d="M-56.80 200.29A119 119 0 0 1 -52.54 119.00L2.69 142.45A59 59 0 0 0 0.58 182.75Z" fill="#F2E683" stroke="#F2E683" stroke-width="0.6"/><path d="M-52.54 119.00A119 119 0 0 1 20.23 52.32L38.77 109.39A59 59 0 0 0 2.69 142.45Z" fill="#82C06E" stroke="#82C06E" stroke-width="0.6"/><path d="M542.23 52.32A119 119 0 0 1 670.16 241.99L624.20 203.42A59 59 0 0 0 560.77 109.39Z" fill="#E84659" stroke="#E84659" stroke-width="0.6"/><path d="M670.16 241.99A119 119 0 0 1 460.29 173.80L520.14 169.62A59 59 0 0 0 624.20 203.42Z" fill="#F2A12B" stroke="#F2A12B" stroke-width="0.6"/><path d="M460.29 173.80A119 119 0 0 1 519.50 62.44L549.50 114.40A59 59 0 0 0 520.14 169.62Z" fill="#F2E683" stroke="#F2E683" stroke-width="0.6"/><path d="M519.50 62.44A119 119 0 0 1 542.23 52.32L560.77 109.39A59 59 0 0 0 549.50 114.40Z" fill="#82C06E" stroke="#82C06E" stroke-width="0.6"/><path d="M-100 70L-60 70L-50 78" fill="none" stroke="#222" stroke-width="1.5"/><path d="M-140 155L-70 155L-60 158" fill="none" stroke="#222" stroke-width="1.5"/><path d="M-110 240L-70 240L-55 235" fill="none" stroke="#222" stroke-width="1.5"/><path d="M200 190L180 190L175 185" fill="none" stroke="#222" stroke-width="1.5"/><path d="M450 60L500 60L510 70" fill="none" stroke="#222" stroke-width="1.5"/><path d="M440 130L500 130L505 135" fill="none" stroke="#222" stroke-width="1.5"/><path d="M480 290L530 290L540 280" fill="none" stroke="#222" stroke-width="1.5"/><path d="M720 120L700 120L695 125" fill="none" stroke="#222" stroke-width="1.5"/></svg><div class="t" style="left:540px;top:463.84px;font-size:12px;line-height:12px;color:#111;">Kunde</div><div class="t" style="left:500px;top:548.84px;font-size:12px;line-height:12px;color:#111;">Lieferant</div><div class="t" style="left:530px;top:633.84px;font-size:12px;line-height:12px;color:#111;">Partner</div><div class="t" style="left:905px;top:583.84px;font-size:12px;line-height:12px;color:#111;">Interessent</div><div class="t" style="left:1050px;top:453.84px;font-size:12px;line-height:12px;color:#111;">&lt; 10.000</div><div class="t" style="left:1030px;top:523.84px;font-size:12px;line-height:12px;color:#111;">&gt; 100.000</div><div class="t" style="left:1090px;top:683.84px;font-size:12px;line-height:12px;color:#111;">10.000 - 50.000</div><div class="t" style="left:1425px;top:513.84px;font-size:12px;line-height:12px;color:#111;">50.000 - 100.000</div><div class="t" style="left:700px;top:479.84px;font-size:12px;line-height:12px;color:#111;">12%</div><div class="t" style="left:670px;top:559.84px;font-size:12px;line-height:12px;color:#111;">15%</div><div class="t" style="left:690px;top:619.84px;font-size:12px;line-height:12px;color:#111;">9%</div><div class="t" style="left:840px;top:589.84px;font-size:12px;line-height:12px;color:#111;">64%</div><div class="t" style="left:1150px;top:489.84px;font-size:12px;line-height:12px;color:#111;">3%</div><div class="t" style="left:1180px;top:529.84px;font-size:12px;line-height:12px;color:#111;">21%</div><div class="t" style="left:1250px;top:669.84px;font-size:12px;line-height:12px;color:#111;">42%</div><div class="t" style="left:1350px;top:509.84px;font-size:12px;line-height:12px;color:#111;">34%</div></div></div>
<div class="t" style="left:192px;top:413.84px;width:200px;text-align:center;font-size:12px;line-height:12px;color:#222;">2</div>
<div class="box" style="left:225px;top:440px;width:138px;height:97px;background:rgba(0,0,0,0.10);"></div>
<div class="box" style="left:223px;top:438px;width:138px;height:97px;background:#fff;overflow:hidden;box-shadow:inset 0 0 0 1px #C8CCD2"><div class="box" style="left:0;top:0;width:1920px;height:1032px;transform-origin:0 0;transform:scale(0.12137) translate(-425px,-180px)"><div class="t" style="left:482.6px;top:223.30px;font-size:28px;line-height:28px;color:#111111;transform:scaleX(0.8936);transform-origin:0 0;font-weight:bold;">sunshine agency</div><div class="t" style="left:481.80px;top:257.46px;font-size:16px;line-height:16px;color:#111111;letter-spacing:-0.128px;">Stand: 18.02.2025</div><div class="box" style="left:1407px;top:220px;width:116.5px;height:48px;background:#8A8A8A;"></div><svg style="left:1407px;top:266px;" width="117" height="4" viewBox="0 0 117 4"><circle cx="2.00" cy="1.5" r="1.4" fill="#8A8A8A"/><circle cx="7.83" cy="1.5" r="1.4" fill="#8A8A8A"/><circle cx="13.66" cy="1.5" r="1.4" fill="#8A8A8A"/><circle cx="19.49" cy="1.5" r="1.4" fill="#8A8A8A"/><circle cx="25.32" cy="1.5" r="1.4" fill="#8A8A8A"/><circle cx="31.15" cy="1.5" r="1.4" fill="#8A8A8A"/><circle cx="36.98" cy="1.5" r="1.4" fill="#8A8A8A"/><circle cx="42.81" cy="1.5" r="1.4" fill="#8A8A8A"/><circle cx="48.64" cy="1.5" r="1.4" fill="#8A8A8A"/><circle cx="54.47" cy="1.5" r="1.4" fill="#8A8A8A"/><circle cx="60.30" cy="1.5" r="1.4" fill="#8A8A8A"/><circle cx="66.13" cy="1.5" r="1.4" fill="#8A8A8A"/><circle cx="71.96" cy="1.5" r="1.4" fill="#8A8A8A"/><circle cx="77.79" cy="1.5" r="1.4" fill="#8A8A8A"/><circle cx="83.62" cy="1.5" r="1.4" fill="#8A8A8A"/><circle cx="89.45" cy="1.5" r="1.4" fill="#8A8A8A"/><circle cx="95.28" cy="1.5" r="1.4" fill="#8A8A8A"/><circle cx="101.11" cy="1.5" r="1.4" fill="#8A8A8A"/><circle cx="106.94" cy="1.5" r="1.4" fill="#8A8A8A"/><circle cx="112.77" cy="1.5" r="1.4" fill="#8A8A8A"/></svg><div class="t" style="left:1408.5px;top:244.14px;font-size:25px;line-height:25px;color:#FFFFFF;transform:scaleX(0.8863);transform-origin:0 0;font-weight:bold;">SUNSHINE</div><svg style="left:1485px;top:238px;" width="8" height="8" viewBox="0 0 8 8"><circle cx="3.7" cy="3.3" r="3.1" fill="#fff"/></svg><div class="box" style="left:1483px;top:244px;width:12px;height:3.5px;background:#8A8A8A;"></div><div class="t" style="left:1408px;top:263.31px;font-size:30px;line-height:30px;color:#111;transform:scaleX(1.1682);transform-origin:0 0;">agency</div><div class="t" style="left:481.44px;top:932.64px;font-size:12px;line-height:12px;color:#111111;letter-spacing:0.203px;">Erstellt am 18.02.2025 um 12:17 Uhr von Oliver Schillinger</div><div class="t" style="left:1452.20px;top:932.74px;font-size:12px;line-height:12px;color:#111111;letter-spacing:0.115px;">Seite 3 von 4</div><div class="box" style="left:482px;top:354px;width:519px;height:19px;background:#DADADA;"></div><div class="box" style="left:1005px;top:354px;width:518px;height:19px;background:#DADADA;"></div><div class="t" style="left:486px;top:357.84px;font-size:12px;line-height:12px;color:#111111;font-weight:bold;">Umsatz nach Branche und Kategorie</div><div class="t" style="left:1009px;top:357.84px;font-size:12px;line-height:12px;color:#111111;font-weight:bold;">Anzahl nach Branche und Kategorie</div><div class="t" style="left:760px;top:395.69px;font-size:11px;line-height:11px;color:#333;font-weight:bold;">Umsatz</div><div class="t" style="left:673px;top:414.54px;font-size:10px;line-height:10px;color:#333;">A</div><div class="t" style="left:730px;top:414.54px;font-size:10px;line-height:10px;color:#333;">B</div><div class="t" style="left:787px;top:414.54px;font-size:10px;line-height:10px;color:#333;">C</div><div class="t" style="left:844px;top:414.54px;font-size:10px;line-height:10px;color:#333;">k.A.</div><div class="t" style="left:893px;top:414.54px;font-size:10px;line-height:10px;color:#333;">Gesamt</div><div class="box" style="left:510px;top:427.0px;width:150px;height:16px;background:#E4E4E4;"></div><div class="t" style="left:515px;top:429.69px;font-size:11px;line-height:11px;color:#333;">Dienstleistungen</div><div class="t" style="left:682px;top:430.54px;font-size:10px;line-height:10px;color:#6A4FC0;">0</div><div class="t" style="left:739px;top:430.54px;font-size:10px;line-height:10px;color:#6A4FC0;">1</div><div class="t" style="left:796px;top:430.54px;font-size:10px;line-height:10px;color:#6A4FC0;">1</div><div class="t" style="left:853px;top:430.54px;font-size:10px;line-height:10px;color:#6A4FC0;">0</div><div class="box" style="left:880px;top:429.0px;width:56px;height:13px;background:#BDBDBD;"></div><div class="t" style="left:515px;top:447.79px;font-size:11px;line-height:11px;color:#333;">Touristik</div><div class="t" style="left:682px;top:448.64px;font-size:10px;line-height:10px;color:#6A4FC0;">1</div><div class="t" style="left:739px;top:448.64px;font-size:10px;line-height:10px;color:#6A4FC0;">1</div><div class="t" style="left:796px;top:448.64px;font-size:10px;line-height:10px;color:#6A4FC0;">0</div><div class="t" style="left:853px;top:448.64px;font-size:10px;line-height:10px;color:#6A4FC0;">1</div><div class="box" style="left:880px;top:447.1px;width:56px;height:13px;background:#BDBDBD;"></div><div class="t" style="left:515px;top:465.89px;font-size:11px;line-height:11px;color:#333;">Einzelhandel</div><div class="t" style="left:682px;top:466.74px;font-size:10px;line-height:10px;color:#6A4FC0;">1</div><div class="t" style="left:739px;top:466.74px;font-size:10px;line-height:10px;color:#6A4FC0;">0</div><div class="t" style="left:796px;top:466.74px;font-size:10px;line-height:10px;color:#6A4FC0;">1</div><div class="t" style="left:853px;top:466.74px;font-size:10px;line-height:10px;color:#6A4FC0;">1</div><div class="box" style="left:880px;top:465.2px;width:56px;height:13px;background:#BDBDBD;"></div><div class="box" style="left:510px;top:481.3px;width:150px;height:16px;background:#E4E4E4;"></div><div class="t" style="left:515px;top:483.99px;font-size:11px;line-height:11px;color:#333;">Baugewerbe + Industrie</div><div class="t" style="left:682px;top:484.84px;font-size:10px;line-height:10px;color:#6A4FC0;">0</div><div class="t" style="left:739px;top:484.84px;font-size:10px;line-height:10px;color:#6A4FC0;">1</div><div class="t" style="left:796px;top:484.84px;font-size:10px;line-height:10px;color:#6A4FC0;">1</div><div class="t" style="left:853px;top:484.84px;font-size:10px;line-height:10px;color:#6A4FC0;">0</div><div class="box" style="left:880px;top:483.3px;width:56px;height:13px;background:#BDBDBD;"></div><div class="t" style="left:515px;top:502.09px;font-size:11px;line-height:11px;color:#333;">Grosshandel</div><div class="t" style="left:682px;top:502.94px;font-size:10px;line-height:10px;color:#6A4FC0;">1</div><div class="t" style="left:739px;top:502.94px;font-size:10px;line-height:10px;color:#6A4FC0;">1</div><div class="t" style="left:796px;top:502.94px;font-size:10px;line-height:10px;color:#6A4FC0;">0</div><div class="t" style="left:853px;top:502.94px;font-size:10px;line-height:10px;color:#6A4FC0;">1</div><div class="box" style="left:880px;top:501.4px;width:56px;height:13px;background:#BDBDBD;"></div><div class="t" style="left:515px;top:520.19px;font-size:11px;line-height:11px;color:#333;">IT</div><div class="t" style="left:682px;top:521.03px;font-size:10px;line-height:10px;color:#6A4FC0;">1</div><div class="t" style="left:739px;top:521.03px;font-size:10px;line-height:10px;color:#6A4FC0;">0</div><div class="t" style="left:796px;top:521.03px;font-size:10px;line-height:10px;color:#6A4FC0;">1</div><div class="t" style="left:853px;top:521.03px;font-size:10px;line-height:10px;color:#6A4FC0;">1</div><div class="box" style="left:880px;top:519.5px;width:56px;height:13px;background:#BDBDBD;"></div><div class="box" style="left:510px;top:535.6px;width:150px;height:16px;background:#E4E4E4;"></div><div class="t" style="left:515px;top:538.29px;font-size:11px;line-height:11px;color:#333;">Kunst + Kultur</div><div class="t" style="left:682px;top:539.13px;font-size:10px;line-height:10px;color:#6A4FC0;">0</div><div class="t" style="left:739px;top:539.13px;font-size:10px;line-height:10px;color:#6A4FC0;">1</div><div class="t" style="left:796px;top:539.13px;font-size:10px;line-height:10px;color:#6A4FC0;">1</div><div class="t" style="left:853px;top:539.13px;font-size:10px;line-height:10px;color:#6A4FC0;">0</div><div class="box" style="left:880px;top:537.6px;width:56px;height:13px;background:#BDBDBD;"></div><div class="t" style="left:515px;top:556.39px;font-size:11px;line-height:11px;color:#333;">Auto, Verkehr</div><div class="t" style="left:682px;top:557.24px;font-size:10px;line-height:10px;color:#6A4FC0;">1</div><div class="t" style="left:739px;top:557.24px;font-size:10px;line-height:10px;color:#6A4FC0;">1</div><div class="t" style="left:796px;top:557.24px;font-size:10px;line-height:10px;color:#6A4FC0;">0</div><div class="t" style="left:853px;top:557.24px;font-size:10px;line-height:10px;color:#6A4FC0;">1</div><div class="box" style="left:880px;top:555.7px;width:56px;height:13px;background:#BDBDBD;"></div><div class="t" style="left:515px;top:574.49px;font-size:11px;line-height:11px;color:#333;">Finanzen</div><div class="t" style="left:682px;top:575.33px;font-size:10px;line-height:10px;color:#6A4FC0;">1</div><div class="t" style="left:739px;top:575.33px;font-size:10px;line-height:10px;color:#6A4FC0;">0</div><div class="t" style="left:796px;top:575.33px;font-size:10px;line-height:10px;color:#6A4FC0;">1</div><div class="t" style="left:853px;top:575.33px;font-size:10px;line-height:10px;color:#6A4FC0;">1</div><div class="box" style="left:880px;top:573.8px;width:56px;height:13px;background:#BDBDBD;"></div><div class="box" style="left:510px;top:589.9px;width:150px;height:16px;background:#E4E4E4;"></div><div class="t" style="left:515px;top:592.59px;font-size:11px;line-height:11px;color:#333;">Gesundheitswesen</div><div class="t" style="left:682px;top:593.43px;font-size:10px;line-height:10px;color:#6A4FC0;">0</div><div class="t" style="left:739px;top:593.43px;font-size:10px;line-height:10px;color:#6A4FC0;">1</div><div class="t" style="left:796px;top:593.43px;font-size:10px;line-height:10px;color:#6A4FC0;">1</div><div class="t" style="left:853px;top:593.43px;font-size:10px;line-height:10px;color:#6A4FC0;">0</div><div class="box" style="left:880px;top:591.9px;width:56px;height:13px;background:#BDBDBD;"></div><div class="t" style="left:515px;top:610.69px;font-size:11px;line-height:11px;color:#333;">Gesamt</div><div class="t" style="left:682px;top:611.53px;font-size:10px;line-height:10px;color:#6A4FC0;">1</div><div class="t" style="left:739px;top:611.53px;font-size:10px;line-height:10px;color:#6A4FC0;">1</div><div class="t" style="left:796px;top:611.53px;font-size:10px;line-height:10px;color:#6A4FC0;">0</div><div class="t" style="left:853px;top:611.53px;font-size:10px;line-height:10px;color:#6A4FC0;">1</div><div class="box" style="left:880px;top:610.0px;width:56px;height:13px;background:#BDBDBD;"></div><div class="box" style="left:492px;top:520px;width:6px;height:50px;background:#6A4FC0;"></div><div class="t" style="left:1278px;top:395.69px;font-size:11px;line-height:11px;color:#333;font-weight:bold;">Umsatz</div><div class="t" style="left:1191px;top:414.54px;font-size:10px;line-height:10px;color:#333;">A</div><div class="t" style="left:1248px;top:414.54px;font-size:10px;line-height:10px;color:#333;">B</div><div class="t" style="left:1305px;top:414.54px;font-size:10px;line-height:10px;color:#333;">C</div><div class="t" style="left:1362px;top:414.54px;font-size:10px;line-height:10px;color:#333;">k.A.</div><div class="t" style="left:1411px;top:414.54px;font-size:10px;line-height:10px;color:#333;">Gesamt</div><div class="box" style="left:1028px;top:427.0px;width:150px;height:16px;background:#E4E4E4;"></div><div class="t" style="left:1033px;top:429.69px;font-size:11px;line-height:11px;color:#333;">Dienstleistungen</div><div class="t" style="left:1200px;top:430.54px;font-size:10px;line-height:10px;color:#6A4FC0;">0</div><div class="t" style="left:1257px;top:430.54px;font-size:10px;line-height:10px;color:#6A4FC0;">1</div><div class="t" style="left:1314px;top:430.54px;font-size:10px;line-height:10px;color:#6A4FC0;">1</div><div class="t" style="left:1371px;top:430.54px;font-size:10px;line-height:10px;color:#6A4FC0;">0</div><div class="box" style="left:1398px;top:429.0px;width:56px;height:13px;background:#BDBDBD;"></div><div class="t" style="left:1033px;top:447.79px;font-size:11px;line-height:11px;color:#333;">Touristik</div><div class="t" style="left:1200px;top:448.64px;font-size:10px;line-height:10px;color:#6A4FC0;">1</div><div class="t" style="left:1257px;top:448.64px;font-size:10px;line-height:10px;color:#6A4FC0;">1</div><div class="t" style="left:1314px;top:448.64px;font-size:10px;line-height:10px;color:#6A4FC0;">0</div><div class="t" style="left:1371px;top:448.64px;font-size:10px;line-height:10px;color:#6A4FC0;">1</div><div class="box" style="left:1398px;top:447.1px;width:56px;height:13px;background:#BDBDBD;"></div><div class="t" style="left:1033px;top:465.89px;font-size:11px;line-height:11px;color:#333;">Einzelhandel</div><div class="t" style="left:1200px;top:466.74px;font-size:10px;line-height:10px;color:#6A4FC0;">1</div><div class="t" style="left:1257px;top:466.74px;font-size:10px;line-height:10px;color:#6A4FC0;">0</div><div class="t" style="left:1314px;top:466.74px;font-size:10px;line-height:10px;color:#6A4FC0;">1</div><div class="t" style="left:1371px;top:466.74px;font-size:10px;line-height:10px;color:#6A4FC0;">1</div><div class="box" style="left:1398px;top:465.2px;width:56px;height:13px;background:#BDBDBD;"></div><div class="box" style="left:1028px;top:481.3px;width:150px;height:16px;background:#E4E4E4;"></div><div class="t" style="left:1033px;top:483.99px;font-size:11px;line-height:11px;color:#333;">Baugewerbe + Industrie</div><div class="t" style="left:1200px;top:484.84px;font-size:10px;line-height:10px;color:#6A4FC0;">0</div><div class="t" style="left:1257px;top:484.84px;font-size:10px;line-height:10px;color:#6A4FC0;">1</div><div class="t" style="left:1314px;top:484.84px;font-size:10px;line-height:10px;color:#6A4FC0;">1</div><div class="t" style="left:1371px;top:484.84px;font-size:10px;line-height:10px;color:#6A4FC0;">0</div><div class="box" style="left:1398px;top:483.3px;width:56px;height:13px;background:#BDBDBD;"></div><div class="t" style="left:1033px;top:502.09px;font-size:11px;line-height:11px;color:#333;">Grosshandel</div><div class="t" style="left:1200px;top:502.94px;font-size:10px;line-height:10px;color:#6A4FC0;">1</div><div class="t" style="left:1257px;top:502.94px;font-size:10px;line-height:10px;color:#6A4FC0;">1</div><div class="t" style="left:1314px;top:502.94px;font-size:10px;line-height:10px;color:#6A4FC0;">0</div><div class="t" style="left:1371px;top:502.94px;font-size:10px;line-height:10px;color:#6A4FC0;">1</div><div class="box" style="left:1398px;top:501.4px;width:56px;height:13px;background:#BDBDBD;"></div><div class="t" style="left:1033px;top:520.19px;font-size:11px;line-height:11px;color:#333;">IT</div><div class="t" style="left:1200px;top:521.03px;font-size:10px;line-height:10px;color:#6A4FC0;">1</div><div class="t" style="left:1257px;top:521.03px;font-size:10px;line-height:10px;color:#6A4FC0;">0</div><div class="t" style="left:1314px;top:521.03px;font-size:10px;line-height:10px;color:#6A4FC0;">1</div><div class="t" style="left:1371px;top:521.03px;font-size:10px;line-height:10px;color:#6A4FC0;">1</div><div class="box" style="left:1398px;top:519.5px;width:56px;height:13px;background:#BDBDBD;"></div><div class="box" style="left:1028px;top:535.6px;width:150px;height:16px;background:#E4E4E4;"></div><div class="t" style="left:1033px;top:538.29px;font-size:11px;line-height:11px;color:#333;">Kunst + Kultur</div><div class="t" style="left:1200px;top:539.13px;font-size:10px;line-height:10px;color:#6A4FC0;">0</div><div class="t" style="left:1257px;top:539.13px;font-size:10px;line-height:10px;color:#6A4FC0;">1</div><div class="t" style="left:1314px;top:539.13px;font-size:10px;line-height:10px;color:#6A4FC0;">1</div><div class="t" style="left:1371px;top:539.13px;font-size:10px;line-height:10px;color:#6A4FC0;">0</div><div class="box" style="left:1398px;top:537.6px;width:56px;height:13px;background:#BDBDBD;"></div><div class="t" style="left:1033px;top:556.39px;font-size:11px;line-height:11px;color:#333;">Auto, Verkehr</div><div class="t" style="left:1200px;top:557.24px;font-size:10px;line-height:10px;color:#6A4FC0;">1</div><div class="t" style="left:1257px;top:557.24px;font-size:10px;line-height:10px;color:#6A4FC0;">1</div><div class="t" style="left:1314px;top:557.24px;font-size:10px;line-height:10px;color:#6A4FC0;">0</div><div class="t" style="left:1371px;top:557.24px;font-size:10px;line-height:10px;color:#6A4FC0;">1</div><div class="box" style="left:1398px;top:555.7px;width:56px;height:13px;background:#BDBDBD;"></div><div class="t" style="left:1033px;top:574.49px;font-size:11px;line-height:11px;color:#333;">Finanzen</div><div class="t" style="left:1200px;top:575.33px;font-size:10px;line-height:10px;color:#6A4FC0;">1</div><div class="t" style="left:1257px;top:575.33px;font-size:10px;line-height:10px;color:#6A4FC0;">0</div><div class="t" style="left:1314px;top:575.33px;font-size:10px;line-height:10px;color:#6A4FC0;">1</div><div class="t" style="left:1371px;top:575.33px;font-size:10px;line-height:10px;color:#6A4FC0;">1</div><div class="box" style="left:1398px;top:573.8px;width:56px;height:13px;background:#BDBDBD;"></div><div class="box" style="left:1028px;top:589.9px;width:150px;height:16px;background:#E4E4E4;"></div><div class="t" style="left:1033px;top:592.59px;font-size:11px;line-height:11px;color:#333;">Gesundheitswesen</div><div class="t" style="left:1200px;top:593.43px;font-size:10px;line-height:10px;color:#6A4FC0;">0</div><div class="t" style="left:1257px;top:593.43px;font-size:10px;line-height:10px;color:#6A4FC0;">1</div><div class="t" style="left:1314px;top:593.43px;font-size:10px;line-height:10px;color:#6A4FC0;">1</div><div class="t" style="left:1371px;top:593.43px;font-size:10px;line-height:10px;color:#6A4FC0;">0</div><div class="box" style="left:1398px;top:591.9px;width:56px;height:13px;background:#BDBDBD;"></div><div class="t" style="left:1033px;top:610.69px;font-size:11px;line-height:11px;color:#333;">Gesamt</div><div class="t" style="left:1200px;top:611.53px;font-size:10px;line-height:10px;color:#6A4FC0;">1</div><div class="t" style="left:1257px;top:611.53px;font-size:10px;line-height:10px;color:#6A4FC0;">1</div><div class="t" style="left:1314px;top:611.53px;font-size:10px;line-height:10px;color:#6A4FC0;">0</div><div class="t" style="left:1371px;top:611.53px;font-size:10px;line-height:10px;color:#6A4FC0;">1</div><div class="box" style="left:1398px;top:610.0px;width:56px;height:13px;background:#BDBDBD;"></div><div class="box" style="left:1010px;top:520px;width:6px;height:50px;background:#6A4FC0;"></div></div></div>
<div class="t" style="left:192px;top:541.84px;width:200px;text-align:center;font-size:12px;line-height:12px;color:#222;">3</div>
<div class="box" style="left:225px;top:568px;width:138px;height:97px;background:rgba(0,0,0,0.10);"></div>
<div class="box" style="left:223px;top:566px;width:138px;height:97px;background:#fff;overflow:hidden;box-shadow:inset 0 0 0 1px #C8CCD2"><div class="box" style="left:0;top:0;width:1920px;height:1032px;transform-origin:0 0;transform:scale(0.12137) translate(-425px,-180px)"><div class="t" style="left:482.6px;top:223.30px;font-size:28px;line-height:28px;color:#111111;transform:scaleX(0.8936);transform-origin:0 0;font-weight:bold;">sunshine agency</div><div class="t" style="left:481.80px;top:257.46px;font-size:16px;line-height:16px;color:#111111;letter-spacing:-0.128px;">Stand: 18.02.2025</div><div class="box" style="left:1407px;top:220px;width:116.5px;height:48px;background:#8A8A8A;"></div><svg style="left:1407px;top:266px;" width="117" height="4" viewBox="0 0 117 4"><circle cx="2.00" cy="1.5" r="1.4" fill="#8A8A8A"/><circle cx="7.83" cy="1.5" r="1.4" fill="#8A8A8A"/><circle cx="13.66" cy="1.5" r="1.4" fill="#8A8A8A"/><circle cx="19.49" cy="1.5" r="1.4" fill="#8A8A8A"/><circle cx="25.32" cy="1.5" r="1.4" fill="#8A8A8A"/><circle cx="31.15" cy="1.5" r="1.4" fill="#8A8A8A"/><circle cx="36.98" cy="1.5" r="1.4" fill="#8A8A8A"/><circle cx="42.81" cy="1.5" r="1.4" fill="#8A8A8A"/><circle cx="48.64" cy="1.5" r="1.4" fill="#8A8A8A"/><circle cx="54.47" cy="1.5" r="1.4" fill="#8A8A8A"/><circle cx="60.30" cy="1.5" r="1.4" fill="#8A8A8A"/><circle cx="66.13" cy="1.5" r="1.4" fill="#8A8A8A"/><circle cx="71.96" cy="1.5" r="1.4" fill="#8A8A8A"/><circle cx="77.79" cy="1.5" r="1.4" fill="#8A8A8A"/><circle cx="83.62" cy="1.5" r="1.4" fill="#8A8A8A"/><circle cx="89.45" cy="1.5" r="1.4" fill="#8A8A8A"/><circle cx="95.28" cy="1.5" r="1.4" fill="#8A8A8A"/><circle cx="101.11" cy="1.5" r="1.4" fill="#8A8A8A"/><circle cx="106.94" cy="1.5" r="1.4" fill="#8A8A8A"/><circle cx="112.77" cy="1.5" r="1.4" fill="#8A8A8A"/></svg><div class="t" style="left:1408.5px;top:244.14px;font-size:25px;line-height:25px;color:#FFFFFF;transform:scaleX(0.8863);transform-origin:0 0;font-weight:bold;">SUNSHINE</div><svg style="left:1485px;top:238px;" width="8" height="8" viewBox="0 0 8 8"><circle cx="3.7" cy="3.3" r="3.1" fill="#fff"/></svg><div class="box" style="left:1483px;top:244px;width:12px;height:3.5px;background:#8A8A8A;"></div><div class="t" style="left:1408px;top:263.31px;font-size:30px;line-height:30px;color:#111;transform:scaleX(1.1682);transform-origin:0 0;">agency</div><div class="t" style="left:481.44px;top:932.64px;font-size:12px;line-height:12px;color:#111111;letter-spacing:0.203px;">Erstellt am 18.02.2025 um 12:17 Uhr von Oliver Schillinger</div><div class="t" style="left:1452.20px;top:932.74px;font-size:12px;line-height:12px;color:#111111;letter-spacing:0.115px;">Seite 4 von 4</div><div class="box" style="left:482px;top:354px;width:519px;height:19px;background:#DADADA;"></div><div class="box" style="left:1005px;top:354px;width:518px;height:19px;background:#DADADA;"></div><div class="t" style="left:486px;top:357.84px;font-size:12px;line-height:12px;color:#111111;font-weight:bold;">Umsatz Vorjahr</div><div class="t" style="left:1009px;top:357.84px;font-size:12px;line-height:12px;color:#111111;font-weight:bold;">Umsatz aktuell</div><svg style="left:0px;top:0px;" width="1920" height="1032" viewBox="0 0 1920 1032"><rect x="581" y="427" width="387" height="395" fill="#fff" stroke="#BBB" stroke-width="2"/><rect x="581" y="427.0" width="387" height="2" fill="#CFCFCF"/><rect x="526" y="424.0" width="40" height="6" fill="#8A8A8A"/><rect x="581" y="483.4" width="387" height="2" fill="#CFCFCF"/><rect x="526" y="480.4" width="40" height="6" fill="#8A8A8A"/><rect x="581" y="539.9" width="387" height="2" fill="#CFCFCF"/><rect x="526" y="536.9" width="40" height="6" fill="#8A8A8A"/><rect x="581" y="596.3" width="387" height="2" fill="#CFCFCF"/><rect x="526" y="593.3" width="40" height="6" fill="#8A8A8A"/><rect x="581" y="652.7" width="387" height="2" fill="#CFCFCF"/><rect x="526" y="649.7" width="40" height="6" fill="#8A8A8A"/><rect x="581" y="709.1" width="387" height="2" fill="#CFCFCF"/><rect x="526" y="706.1" width="40" height="6" fill="#8A8A8A"/><rect x="581" y="765.6" width="387" height="2" fill="#CFCFCF"/><rect x="526" y="762.6" width="40" height="6" fill="#8A8A8A"/><rect x="581" y="822.0" width="387" height="2" fill="#CFCFCF"/><rect x="526" y="819.0" width="40" height="6" fill="#8A8A8A"/><rect x="820" y="452" width="91" height="370" fill="#F2A12B"/><rect x="639" y="789" width="74" height="33" fill="#F2A12B"/><path d="M676.0 798L865.5 444" stroke="#3AB3CC" stroke-width="8"/><rect x="754.5" y="850" width="40" height="6" fill="#3AB3CC"/><rect x="639" y="835" width="60" height="6" fill="#8A8A8A"/><rect x="820" y="835" width="60" height="6" fill="#8A8A8A"/><rect x="1100" y="427" width="387" height="395" fill="#fff" stroke="#BBB" stroke-width="2"/><rect x="1100" y="427.0" width="387" height="2" fill="#CFCFCF"/><rect x="1045" y="424.0" width="40" height="6" fill="#8A8A8A"/><rect x="1100" y="483.4" width="387" height="2" fill="#CFCFCF"/><rect x="1045" y="480.4" width="40" height="6" fill="#8A8A8A"/><rect x="1100" y="539.9" width="387" height="2" fill="#CFCFCF"/><rect x="1045" y="536.9" width="40" height="6" fill="#8A8A8A"/><rect x="1100" y="596.3" width="387" height="2" fill="#CFCFCF"/><rect x="1045" y="593.3" width="40" height="6" fill="#8A8A8A"/><rect x="1100" y="652.7" width="387" height="2" fill="#CFCFCF"/><rect x="1045" y="649.7" width="40" height="6" fill="#8A8A8A"/><rect x="1100" y="709.1" width="387" height="2" fill="#CFCFCF"/><rect x="1045" y="706.1" width="40" height="6" fill="#8A8A8A"/><rect x="1100" y="765.6" width="387" height="2" fill="#CFCFCF"/><rect x="1045" y="762.6" width="40" height="6" fill="#8A8A8A"/><rect x="1100" y="822.0" width="387" height="2" fill="#CFCFCF"/><rect x="1045" y="819.0" width="40" height="6" fill="#8A8A8A"/><rect x="1339" y="452" width="82" height="370" fill="#F2A12B"/><rect x="1150" y="789" width="82" height="33" fill="#F2A12B"/><path d="M1191.0 798L1380.0 444" stroke="#3AB3CC" stroke-width="8"/><rect x="1273.5" y="850" width="40" height="6" fill="#3AB3CC"/><rect x="1150" y="835" width="60" height="6" fill="#8A8A8A"/><rect x="1339" y="835" width="60" height="6" fill="#8A8A8A"/></svg></div></div>
<div class="t" style="left:192px;top:669.84px;width:200px;text-align:center;font-size:12px;line-height:12px;color:#222;">4</div>
<div class="box" style="left:230.5px;top:998px;width:1.3px;height:9px;background:#6A6A6A;"></div>
<svg style="left:232px;top:997px;" width="8" height="11" viewBox="0 0 8 11"><path d="M6.5 1v9L1.5 5.5z" fill="#6A6A6A"/></svg>
<svg style="left:268px;top:997px;" width="8" height="11" viewBox="0 0 8 11"><path d="M6.5 1v9L1.5 5.5z" fill="#6A6A6A"/></svg>
<svg style="left:308px;top:997px;" width="8" height="11" viewBox="0 0 8 11"><path d="M1.5 1v9l5-4.5z" fill="#6A6A6A"/></svg>
<div class="t" style="left:1546.52px;top:996.84px;font-size:12px;line-height:12px;color:#808080;letter-spacing:-0.127px;">33 / 48</div>
<svg style="left:1596px;top:996px;" width="14" height="14" viewBox="0 0 14 14"><path d="M0.5 1h13L8.5 6.5V13h-3V6.5z" fill="#6A6A6A"/></svg>
<div class="box" style="left:1617px;top:152px;width:2px;height:861px;background:#D0D0D0;"></div>
<div class="t" style="left:1625.00px;top:158.73px;font-size:23px;line-height:23px;color:#FF7F00;letter-spacing:-0.441px;">Aktionen</div>
<svg style="left:1886px;top:162px;" width="10" height="14" viewBox="0 0 10 14"><rect x="2.5" y="1" width="4" height="6" fill="none" stroke="#333" stroke-width="1.1"/><path d="M0.5 7.5h8M4.5 7.5v5" stroke="#333" stroke-width="1.2"/></svg>
<svg style="left:1903px;top:164px;" width="9" height="9" viewBox="0 0 9 9"><path d="M0.5 0.5L8.5 8.5M8.5 0.5L0.5 8.5" stroke="#333" stroke-width="1.1"/></svg>
<div class="box" style="left:1620px;top:188px;width:300px;height:19px;background:#EFEFEF;border:1px solid #D3DAE6"></div>
<svg style="left:1623px;top:192.5px;" width="10" height="10" viewBox="0 0 10 10"><path d="M1.5 3l3.5 3.5L8.5 3" fill="none" stroke="#222" stroke-width="1.4"/></svg>
<svg style="left:1638px;top:189px;" width="14" height="16" viewBox="0 0 14 16"><path d="M6 0.5h6L8.5 6H12L3 15.5 6 8H2.5z" fill="#EEC070"/></svg>
<div class="t" style="left:1656.90px;top:191.34px;font-size:12px;line-height:12px;color:#222222;letter-spacing:-0.020px;">Schnellaktionen</div>
<svg style="left:1622px;top:213px;" width="16" height="16" viewBox="0 0 16 16"><circle cx="8" cy="4" r="3.2" fill="#5E9E86"/><path d="M1.5 15c0-4.5 2.8-6.5 6.5-6.5s6.5 2 6.5 6.5z" fill="#5E9E86"/><path d="M8 9v3" stroke="#fff" stroke-width="1"/></svg>
<div class="t" style="left:1644.54px;top:214.84px;font-size:12px;line-height:12px;color:#222222;letter-spacing:-0.021px;">Neuen Kontakt anlegen</div>
<svg style="left:1622px;top:233px;" width="16" height="16" viewBox="0 0 16 16"><path d="M1.5 8.2L8 2l6.5 6.2" fill="none" stroke="#E0603F" stroke-width="2"/><path d="M3.5 7.5v6.5h9V7.5" fill="#fff" stroke="#6A6A6A" stroke-width="1.1"/><rect x="6.8" y="9" width="2.4" height="4.5" fill="#E6B36A"/><path d="M12 2.5l0.8 1.8" stroke="#E02020" stroke-width="1.4"/></svg>
<div class="t" style="left:1644.54px;top:234.84px;font-size:12px;line-height:12px;color:#222222;letter-spacing:-0.113px;">Neue Firma anlegen</div>
<svg style="left:1622px;top:253px;" width="17" height="17" viewBox="0 0 17 17"><path d="M4.5 16C4 14 6.5 12.5 10 11.3 13.5 10 15 8.5 14.5 6 13.8 3 10 2.2 7 2.3 3 2.5 0.5 4.5 1 6.5 1.5 8.5 6 9.2 10 8.8 12.5 8.5 14 8 16.2 7.8" fill="none" stroke="#5A5A5A" stroke-width="1.15"/><path d="M13.8 5.8l2.6 2-2.4 2" fill="none" stroke="#5A5A5A" stroke-width="1.1"/></svg>
<div class="t" style="left:1644.54px;top:254.84px;font-size:12px;line-height:12px;color:#222222;letter-spacing:-0.144px;">Neuen Verteiler anlegen</div>
<svg style="left:1622px;top:273px;" width="17" height="16" viewBox="0 0 17 16"><path d="M5.5 5.6L14.2 4.8" stroke="#5A9E85" stroke-width="2" fill="none"/><path d="M11.6 2.2L14.8 4.8 11.9 7.4" stroke="#5A9E85" stroke-width="2" fill="none" stroke-linecap="round"/><path d="M12 11.2L2.6 12" stroke="#5A9E85" stroke-width="2" fill="none"/><path d="M5.2 9.2L2 11.9 5.2 14.4" stroke="#5A9E85" stroke-width="2" fill="none" stroke-linecap="round"/></svg>
<div class="t" style="left:1644.54px;top:274.84px;font-size:12px;line-height:12px;color:#222222;letter-spacing:0.071px;">Neue Aktivit&auml;t anlegen</div>
<div class="box" style="left:1620px;top:304px;width:300px;height:19px;background:#EFEFEF;border:1px solid #D3DAE6"></div>
<svg style="left:1623px;top:308.5px;" width="10" height="10" viewBox="0 0 10 10"><path d="M1.5 3l3.5 3.5L8.5 3" fill="none" stroke="#222" stroke-width="1.4"/></svg>
<svg style="left:1638px;top:305px;" width="17" height="17" viewBox="0 0 17 17"><circle cx="8.5" cy="8.5" r="8" fill="#3F76B8"/><text x="8.5" y="13.8" text-anchor="middle" font-family="Liberation Sans" font-weight="bold" font-size="14" fill="#fff">?</text></svg>
<div class="t" style="left:1656.54px;top:307.34px;font-size:12px;line-height:12px;color:#222222;letter-spacing:0.270px;">Dokumentation</div>
<svg style="left:1622px;top:329px;" width="16" height="16" viewBox="0 0 16 16"><rect x="2.5" y="1.5" width="11" height="14" fill="#fff" stroke="#6A6A6A"/><rect x="0.5" y="2" width="4" height="2.3" fill="#F03038"/><path d="M5 13l3.5-8 3 7-6.5-1.5" stroke="#E83038" stroke-width="0.9" fill="none"/></svg>
<div class="t" style="left:1644.54px;top:330.84px;font-size:12px;line-height:12px;color:#222222;letter-spacing:0.297px;">Handbuch</div>
<svg style="left:1622px;top:349px;" width="16" height="16" viewBox="0 0 16 16"><rect x="2.5" y="1.5" width="11" height="14" fill="#fff" stroke="#6A6A6A"/><rect x="0.5" y="2" width="4" height="2.3" fill="#F03038"/><path d="M5 13l3.5-8 3 7-6.5-1.5" stroke="#E83038" stroke-width="0.9" fill="none"/></svg>
<div class="t" style="left:1644.54px;top:350.84px;font-size:12px;line-height:12px;color:#222222;letter-spacing:0.062px;">Designer-Handbuch</div>
<svg style="left:1622px;top:369px;" width="16" height="16" viewBox="0 0 16 16"><rect x="2.5" y="1.5" width="11" height="14" fill="#fff" stroke="#6A6A6A"/><rect x="0.5" y="2" width="4" height="2.3" fill="#F03038"/><path d="M5 13l3.5-8 3 7-6.5-1.5" stroke="#E83038" stroke-width="0.9" fill="none"/></svg>
<div class="t" style="left:1644.54px;top:370.84px;font-size:12px;line-height:12px;color:#222222;letter-spacing:-0.219px;">Programmierer-Referenz (SDK)</div>
<svg style="left:1622px;top:389px;" width="16" height="16" viewBox="0 0 16 16"><path d="M1 3h5l1 1.5h7V7H1z" fill="#E8C27E"/><path d="M1 14L3 6.5h12.5L13.5 14z" fill="#F0CF8E"/></svg>
<div class="t" style="left:1645.50px;top:390.84px;font-size:12px;line-height:12px;color:#222222;letter-spacing:-0.238px;">Weitere...</div>
<div class="box" style="left:1620px;top:420px;width:300px;height:19px;background:#EFEFEF;border:1px solid #D3DAE6"></div>
<svg style="left:1623px;top:424.5px;" width="10" height="10" viewBox="0 0 10 10"><path d="M1.5 3l3.5 3.5L8.5 3" fill="none" stroke="#222" stroke-width="1.4"/></svg>
<svg style="left:1638px;top:421px;" width="16" height="16" viewBox="0 0 16 16"><path d="M1.5 8.2L8 2l6.5 6.2" fill="none" stroke="#E0603F" stroke-width="2"/><path d="M3.5 7.5v6.5h9V7.5" fill="#fff" stroke="#6A6A6A" stroke-width="1.1"/><rect x="6.8" y="9" width="2.4" height="4.5" fill="#E6B36A"/><path d="M12 2.5l0.8 1.8" stroke="#E02020" stroke-width="1.4"/></svg>
<div class="t" style="left:1656.54px;top:423.34px;font-size:12px;line-height:12px;color:#222222;letter-spacing:0.052px;">Firmen</div>
<svg style="left:1622px;top:445px;" width="16" height="16" viewBox="0 0 16 16"><path d="M1.5 1v13.5H15" fill="none" stroke="#6A6A6A"/><path d="M3 11l3.5-4 3 2.5L14 4" fill="none" stroke="#E0603F" stroke-width="1.2"/></svg>
<div class="t" style="left:1644.66px;top:446.84px;font-size:12px;line-height:12px;color:#222222;letter-spacing:-0.150px;">Umsatzzahlen aller Firmen aktualisieren</div>
<div class="box" style="left:1620px;top:476px;width:300px;height:19px;background:#EFEFEF;border:1px solid #D3DAE6"></div>
<svg style="left:1623px;top:480.5px;" width="10" height="10" viewBox="0 0 10 10"><path d="M1.5 3l3.5 3.5L8.5 3" fill="none" stroke="#222" stroke-width="1.4"/></svg>
<svg style="left:1638px;top:477px;" width="17" height="17" viewBox="0 0 17 17"><path d="M4.5 16C4 14 6.5 12.5 10 11.3 13.5 10 15 8.5 14.5 6 13.8 3 10 2.2 7 2.3 3 2.5 0.5 4.5 1 6.5 1.5 8.5 6 9.2 10 8.8 12.5 8.5 14 8 16.2 7.8" fill="none" stroke="#5A5A5A" stroke-width="1.15"/><path d="M13.8 5.8l2.6 2-2.4 2" fill="none" stroke="#5A5A5A" stroke-width="1.1"/></svg>
<div class="t" style="left:1657.50px;top:479.34px;font-size:12px;line-height:12px;color:#222222;letter-spacing:-0.303px;">Verteiler</div>
<svg style="left:1622px;top:501px;" width="17" height="16" viewBox="0 0 17 16"><rect x="0.5" y="1.5" width="14" height="13" fill="#fff" stroke="#777"/><rect x="0.5" y="1.5" width="14" height="2.5" fill="#777"/><path d="M0.5 7.5h14M0.5 11h9M4.5 4v10.5M8 4v10.5M11.5 4v4" stroke="#BDBDBD" stroke-width="0.8"/><rect x="2" y="5" width="4" height="4" fill="#fff" stroke="#F08A3A" stroke-width="1.1"/><circle cx="11" cy="11" r="2.8" fill="#fff" stroke="#555" stroke-width="1.1"/><path d="M13 13l2.5 2.5" stroke="#555" stroke-width="1.3"/></svg>
<div class="t" style="left:1645.50px;top:502.84px;font-size:12px;line-height:12px;color:#222222;letter-spacing:-0.194px;">Verteiler-Kalender anzeigen</div>
<div class="box" style="left:1620px;top:532px;width:300px;height:19px;background:#EFEFEF;border:1px solid #D3DAE6"></div>
<svg style="left:1623px;top:536.5px;" width="10" height="10" viewBox="0 0 10 10"><path d="M1.5 3l3.5 3.5L8.5 3" fill="none" stroke="#222" stroke-width="1.4"/></svg>
<svg style="left:1638px;top:533px;" width="17" height="16" viewBox="0 0 17 16"><path transform="rotate(0 8.5 7.5)" d="M8.5 7.5C6.5 6 5 4.5 5.5 2.8 6 1.3 7.8 1.2 8.5 2.5 9.2 1.2 11 1.3 11.5 2.8 12 4.5 10.5 6 8.5 7.5z" fill="#3DAE3F"/><path transform="rotate(90 8.5 7.5)" d="M8.5 7.5C6.5 6 5 4.5 5.5 2.8 6 1.3 7.8 1.2 8.5 2.5 9.2 1.2 11 1.3 11.5 2.8 12 4.5 10.5 6 8.5 7.5z" fill="#3DAE3F"/><path transform="rotate(180 8.5 7.5)" d="M8.5 7.5C6.5 6 5 4.5 5.5 2.8 6 1.3 7.8 1.2 8.5 2.5 9.2 1.2 11 1.3 11.5 2.8 12 4.5 10.5 6 8.5 7.5z" fill="#3DAE3F"/><path transform="rotate(270 8.5 7.5)" d="M8.5 7.5C6.5 6 5 4.5 5.5 2.8 6 1.3 7.8 1.2 8.5 2.5 9.2 1.2 11 1.3 11.5 2.8 12 4.5 10.5 6 8.5 7.5z" fill="#3DAE3F"/><path d="M8.3 8L1 14.8" stroke="#3DAE3F" stroke-width="1.4"/><path d="M6.8 5.8L8.5 7.5M10.2 5.8L8.5 7.5" stroke="#7ED67A" stroke-width="0.6"/></svg>
<div class="t" style="left:1657.50px;top:535.34px;font-size:12px;line-height:12px;color:#222222;letter-spacing:-0.237px;">Verkaufschancen</div>
<svg style="left:1622px;top:557px;" width="16" height="16" viewBox="0 0 16 16"><path d="M5.5 2.5h5.5l3 3v10h-8.5z" fill="#fff" stroke="#6A6A6A"/><path d="M11 2.5v3h3" fill="none" stroke="#6A6A6A"/><path d="M3 0.5v5M0.5 3h5M1.2 1.2l3.6 3.6M4.8 1.2L1.2 4.8" stroke="#F0B040" stroke-width="0.7"/></svg>
<div class="t" style="left:1644.54px;top:558.84px;font-size:12px;line-height:12px;color:#222222;letter-spacing:-0.185px;">Neue Verkaufschance erstellen</div>
<svg style="left:1622px;top:577px;" width="16" height="16" viewBox="0 0 16 16"><rect x="1.5" y="1.5" width="13" height="13" fill="#fff" stroke="#6A6A6A"/><rect x="3" y="3.5" width="1.4" height="1.4" fill="#3F7CC0"/><rect x="6" y="4" width="1.4" height="1.4" fill="#3F7CC0"/><rect x="9.5" y="3" width="1.4" height="1.4" fill="#3F7CC0"/><rect x="4.5" y="6.5" width="1.4" height="1.4" fill="#3F7CC0"/><rect x="8" y="7" width="1.4" height="1.4" fill="#3F7CC0"/><rect x="11" y="6" width="1.4" height="1.4" fill="#3F7CC0"/><rect x="3.5" y="9.5" width="1.4" height="1.4" fill="#3F7CC0"/><rect x="6.5" y="10" width="1.4" height="1.4" fill="#3F7CC0"/><rect x="10" y="9.5" width="1.4" height="1.4" fill="#3F7CC0"/><rect x="5" y="12.5" width="1.4" height="1.4" fill="#3F7CC0"/><rect x="8.5" y="12" width="1.4" height="1.4" fill="#3F7CC0"/><rect x="11.5" y="11.5" width="1.4" height="1.4" fill="#3F7CC0"/><rect x="12" y="3.5" width="1.4" height="1.4" fill="#3F7CC0"/><rect x="7" y="5.5" width="1.4" height="1.4" fill="#3F7CC0"/></svg>
<div class="t" style="left:1644.42px;top:578.84px;font-size:12px;line-height:12px;color:#222222;letter-spacing:-0.011px;">Info-Board anzeigen</div>
<div class="box" style="left:1620px;top:608px;width:300px;height:19px;background:#EFEFEF;border:1px solid #D3DAE6"></div>
<svg style="left:1623px;top:612.5px;" width="10" height="10" viewBox="0 0 10 10"><path d="M1.5 3l3.5 3.5L8.5 3" fill="none" stroke="#222" stroke-width="1.4"/></svg>
<svg style="left:1638px;top:609px;" width="16" height="16" viewBox="0 0 16 16"><rect x="0" y="1" width="16" height="14.5" fill="#7A7A7A"/><rect x="1" y="3.6" width="14" height="11" fill="#E0E0E0"/><rect x="1.60" y="4.40" width="2.1" height="2.1" fill="#fff"/><rect x="1.60" y="7.10" width="2.1" height="2.1" fill="#fff"/><rect x="1.60" y="9.80" width="2.1" height="2.1" fill="#fff"/><rect x="1.60" y="12.50" width="2.1" height="2.1" fill="#fff"/><rect x="4.30" y="4.40" width="2.1" height="2.1" fill="#fff"/><rect x="4.30" y="7.10" width="2.1" height="2.1" fill="#fff"/><rect x="4.30" y="9.80" width="2.1" height="2.1" fill="#fff"/><rect x="4.30" y="12.50" width="2.1" height="2.1" fill="#fff"/><rect x="7.00" y="4.40" width="2.1" height="2.1" fill="#fff"/><rect x="7.00" y="7.10" width="2.1" height="2.1" fill="#fff"/><rect x="7.00" y="9.80" width="2.1" height="2.1" fill="#fff"/><rect x="7.00" y="12.50" width="2.1" height="2.1" fill="#fff"/><rect x="9.70" y="4.40" width="2.1" height="2.1" fill="#fff"/><rect x="9.70" y="7.10" width="2.1" height="2.1" fill="#fff"/><rect x="9.70" y="9.80" width="2.1" height="2.1" fill="#fff"/><rect x="9.70" y="12.50" width="2.1" height="2.1" fill="#fff"/><rect x="12.40" y="4.40" width="2.1" height="2.1" fill="#fff"/><rect x="12.40" y="7.10" width="2.1" height="2.1" fill="#fff"/><rect x="12.40" y="9.80" width="2.1" height="2.1" fill="#fff"/><rect x="12.40" y="12.50" width="2.1" height="2.1" fill="#fff"/><rect x="4.3" y="6.2" width="3.6" height="3.6" fill="#fff" stroke="#F08A3A" stroke-width="1.1"/></svg>
<div class="t" style="left:1656.54px;top:611.34px;font-size:12px;line-height:12px;color:#222222;letter-spacing:-0.420px;">Events</div>
<svg style="left:1622px;top:633px;" width="16" height="16" viewBox="0 0 16 16"><path d="M5.5 2.5h5.5l3 3v10h-8.5z" fill="#fff" stroke="#6A6A6A"/><path d="M11 2.5v3h3" fill="none" stroke="#6A6A6A"/><path d="M3 0.5v5M0.5 3h5M1.2 1.2l3.6 3.6M4.8 1.2L1.2 4.8" stroke="#F0B040" stroke-width="0.7"/></svg>
<div class="t" style="left:1644.54px;top:634.84px;font-size:12px;line-height:12px;color:#222222;letter-spacing:-0.230px;">Neues Event anlegen</div>
<svg style="left:1622px;top:653px;" width="17" height="16" viewBox="0 0 17 16"><rect x="0.5" y="1.5" width="14" height="13" fill="#fff" stroke="#777"/><rect x="0.5" y="1.5" width="14" height="2.5" fill="#777"/><path d="M0.5 7.5h14M0.5 11h9M4.5 4v10.5M8 4v10.5M11.5 4v4" stroke="#BDBDBD" stroke-width="0.8"/><rect x="2" y="5" width="4" height="4" fill="#fff" stroke="#F08A3A" stroke-width="1.1"/><circle cx="11" cy="11" r="2.8" fill="#fff" stroke="#555" stroke-width="1.1"/><path d="M13 13l2.5 2.5" stroke="#555" stroke-width="1.3"/></svg>
<div class="t" style="left:1644.54px;top:654.84px;font-size:12px;line-height:12px;color:#222222;letter-spacing:-0.162px;">Event-Kalender anzeigen</div>
<div class="box" style="left:1620px;top:684px;width:300px;height:19px;background:#EFEFEF;border:1px solid #D3DAE6"></div>
<svg style="left:1623px;top:688.5px;" width="10" height="10" viewBox="0 0 10 10"><path d="M1.5 3l3.5 3.5L8.5 3" fill="none" stroke="#222" stroke-width="1.4"/></svg>
<svg style="left:1638px;top:685px;" width="16" height="16" viewBox="0 0 16 16"><rect x="1" y="5" width="10" height="10" fill="#fff" stroke="#777"/><rect x="1" y="5" width="10" height="2" fill="#777"/><path d="M1 10h10M1 12.5h10M4.5 7v8M8 7v8" stroke="#BDBDBD" stroke-width="0.8"/><path d="M3 11h4" stroke="#E06040" stroke-width="1.3"/><path d="M5 13.5h5" stroke="#3F7CC0" stroke-width="1.3"/><circle cx="12" cy="5" r="3.5" fill="#fff" stroke="#3F7CC0"/><path d="M12 3v2.2l1.3 1" stroke="#3F7CC0" fill="none" stroke-width="0.9"/><path d="M11 0.8h2" stroke="#3F7CC0"/></svg>
<div class="t" style="left:1656.54px;top:687.34px;font-size:12px;line-height:12px;color:#222222;letter-spacing:0.003px;">Projekte</div>
<svg style="left:1622px;top:709px;" width="17" height="16" viewBox="0 0 17 16"><rect x="0.5" y="1.5" width="14" height="13" fill="#fff" stroke="#777"/><rect x="0.5" y="1.5" width="14" height="2.5" fill="#777"/><path d="M0.5 7.5h14M0.5 11h9M4.5 4v10.5M8 4v10.5M11.5 4v4" stroke="#BDBDBD" stroke-width="0.8"/><rect x="2" y="5" width="4" height="4" fill="#fff" stroke="#F08A3A" stroke-width="1.1"/><circle cx="11" cy="11" r="2.8" fill="#fff" stroke="#555" stroke-width="1.1"/><path d="M13 13l2.5 2.5" stroke="#555" stroke-width="1.3"/></svg>
<div class="t" style="left:1644.54px;top:710.84px;font-size:12px;line-height:12px;color:#222222;letter-spacing:-0.112px;">Projekt-Kalender anzeigen</div>
<div class="box" style="left:1620px;top:988px;width:300px;height:25px;background:#F2F2F2;border-top:1px solid #DADADA"></div>
<div class="box" style="left:1620px;top:988px;width:54px;height:25px;background:#F2F2F2;border:1px solid #DADADA;border-bottom:none"></div>
<div class="box" style="left:1673px;top:988px;width:80px;height:24px;background:#FFFFFF;border:1px solid #DADADA;border-bottom:none"></div>
<div class="box" style="left:1673px;top:1009px;width:80px;height:2px;background:#FF7F00;"></div>
<svg style="left:1626px;top:992px;" width="14" height="14" viewBox="0 0 14 14"><path d="M0.5 1h13L8.5 6.5V13h-3V6.5z" fill="#6A6A6A"/></svg>
<div class="t" style="left:1643.44px;top:993.14px;font-size:12px;line-height:12px;color:#8A8A8A;letter-spacing:-0.032px;">Filter</div>
<svg style="left:1679px;top:990px;" width="17" height="17" viewBox="0 0 17 17"><circle cx="6" cy="6" r="4" fill="none" stroke="#3F76B8" stroke-width="2.6" stroke-dasharray="1.6,1.2"/><circle cx="6" cy="6" r="2.6" fill="#3F76B8"/><circle cx="10.5" cy="10.5" r="5.5" fill="#fff" stroke="#555" stroke-width="1.1"/><path d="M8.8 7.5v6l4.5-3z" fill="#5FA38A"/></svg>
<div class="t" style="left:1698.26px;top:993.14px;font-size:12px;line-height:12px;color:#FF7F00;letter-spacing:-0.043px;font-weight:bold;">Aktionen</div>
<div class="box" style="left:0px;top:1013px;width:1920px;height:19px;background:#F0F0F0;border-top:1px solid #D8D8D8"></div>
<div class="t" style="left:1696.16px;top:1016.24px;font-size:12px;line-height:12px;color:#333;letter-spacing:-0.722px;">18.02.2025</div>
<div class="t" style="left:1755.86px;top:1016.24px;font-size:12px;line-height:12px;color:#333;letter-spacing:-0.650px;">12:18</div>
<div class="t" style="left:1793.40px;top:1016.24px;font-size:12px;line-height:12px;color:#333;letter-spacing:0.073px;">Administrator@(local)</div></body></html>
